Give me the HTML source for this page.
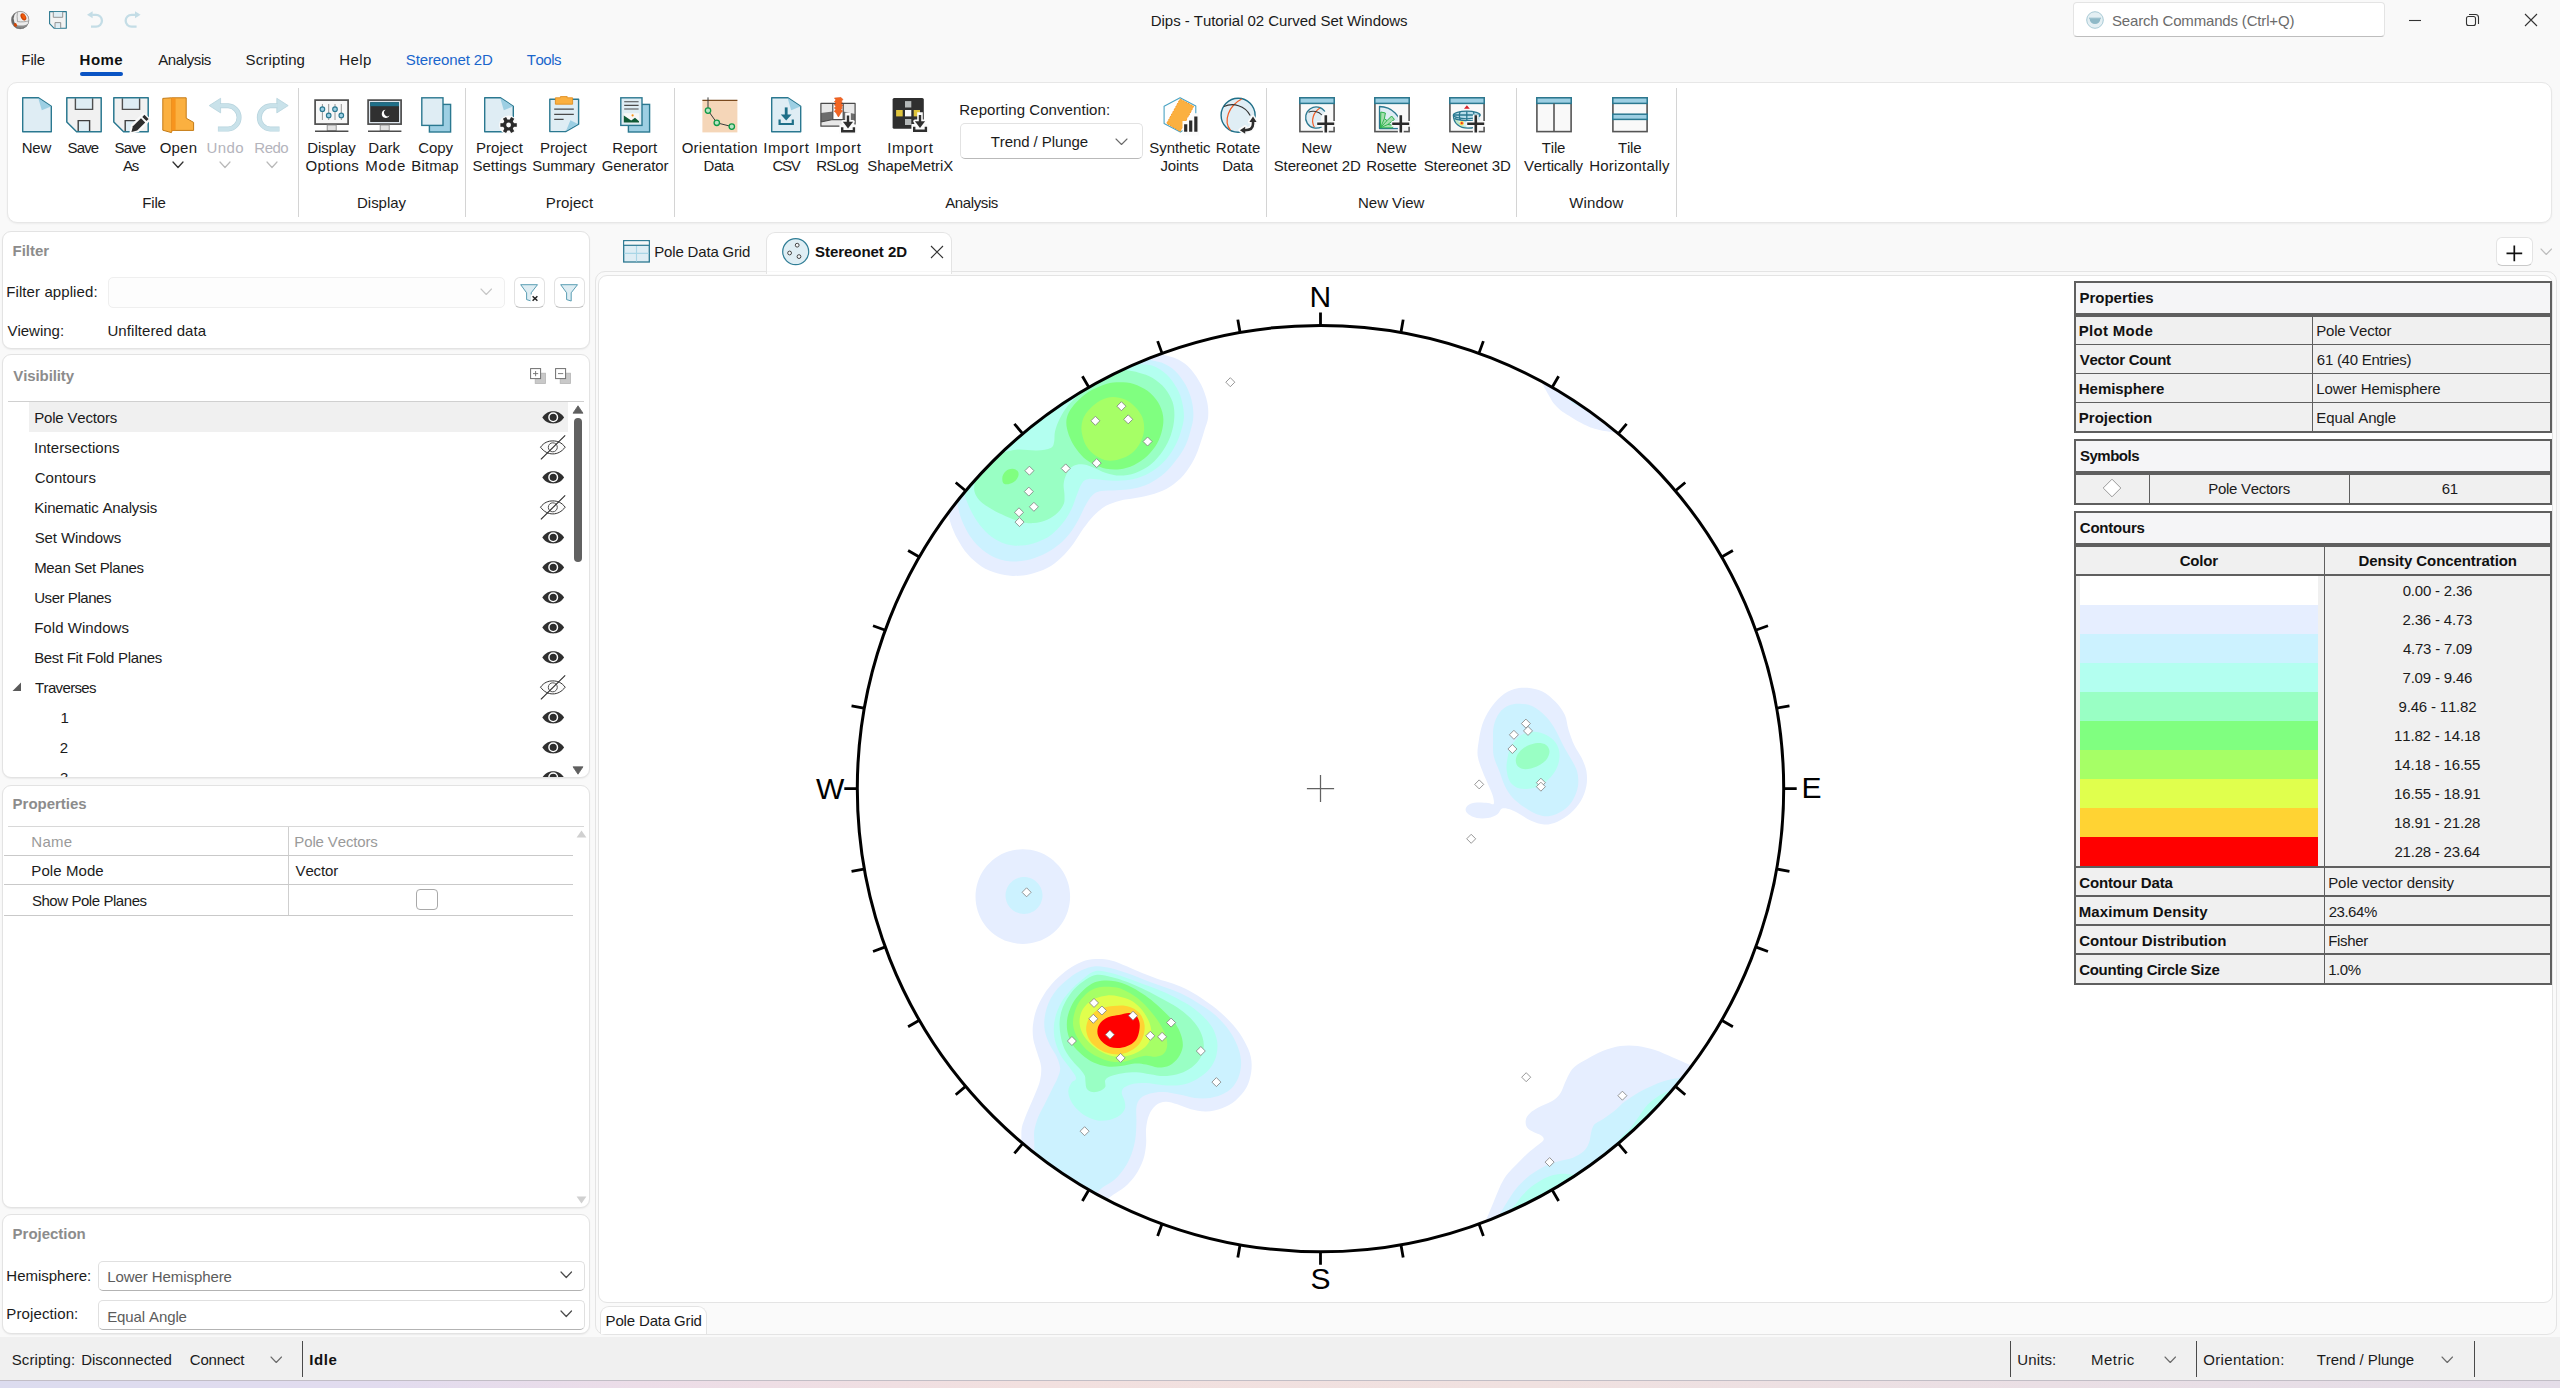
<!DOCTYPE html>
<html lang="en"><head><meta charset="utf-8"><title>Dips - Tutorial 02 Curved Set Windows</title><style>
html,body{margin:0;padding:0;overflow:hidden;}
body{width:2560px;height:1388px;overflow:hidden;background:#f9f9f9;font-family:"Liberation Sans",sans-serif;position:relative;}
.t{position:absolute;white-space:pre;font-kerning:none;}
.b{position:absolute;display:block;}
svg{overflow:visible;}
</style></head>
<body>
<span class="t" style="left:1150.77px;top:10.30px;font-size:15px;line-height:21px;color:#1b1b1b;letter-spacing:-0.046px;">Dips - Tutorial 02 Curved Set Windows</span>
<div class="b" style="left:2073px;top:2px;width:311.5px;height:35px;background:#fff;border:1px solid #e4e4e4;border-bottom-color:#bdbdbd;border-radius:4px;box-sizing:border-box;"></div>
<svg class="b" style="left:2086px;top:11px;" width="18" height="18" viewBox="0 0 18 18"><circle cx="9" cy="9" r="8.3" fill="#e4eff3" stroke="#a9cbd6" stroke-width="1"/><path d="M3.6 7.6 H14.4 A5.4 5.4 0 0 1 3.6 7.6Z" fill="#8fb9c7"/><path d="M3 7.2 H15" stroke="#8fb9c7" stroke-width="1"/></svg>
<span class="t" style="left:2112.02px;top:10.30px;font-size:15px;line-height:21px;color:#6b6b6b;letter-spacing:-0.169px;">Search Commands (Ctrl+Q)</span>
<svg class="b" style="left:2408px;top:14px;" width="14" height="14" viewBox="0 0 14 14"><path d="M1 6.5 H13" stroke="#333" stroke-width="1.1"/></svg>
<svg class="b" style="left:2465px;top:13px;" width="15" height="15" viewBox="0 0 15 15"><rect x="1.5" y="3.5" width="9" height="9" rx="2" fill="none" stroke="#333" stroke-width="1.1"/><path d="M4 1.5 H10.5 A3 3 0 0 1 13.5 4.5 V11" fill="none" stroke="#333" stroke-width="1.1"/></svg>
<svg class="b" style="left:2524px;top:13px;" width="14" height="14" viewBox="0 0 14 14"><path d="M1 1 L13 13 M13 1 L1 13" stroke="#333" stroke-width="1.1"/></svg>
<span class="t" style="left:21.37px;top:49.10px;font-size:15px;line-height:21px;color:#1b1b1b;letter-spacing:-0.124px;">File</span>
<span class="t" style="left:79.60px;top:49.10px;font-size:15px;line-height:21px;color:#111;font-weight:700;letter-spacing:0.480px;">Home</span>
<div class="b" style="left:80px;top:72px;width:43px;height:4px;background:#0a54c4;border-radius:2px;"></div>
<span class="t" style="left:158.17px;top:49.10px;font-size:15px;line-height:21px;color:#1b1b1b;letter-spacing:-0.383px;">Analysis</span>
<span class="t" style="left:245.62px;top:49.10px;font-size:15px;line-height:21px;color:#1b1b1b;letter-spacing:0.124px;">Scripting</span>
<span class="t" style="left:339.37px;top:49.10px;font-size:15px;line-height:21px;color:#1b1b1b;letter-spacing:0.337px;">Help</span>
<span class="t" style="left:405.82px;top:49.10px;font-size:15px;line-height:21px;color:#1a66cc;letter-spacing:-0.117px;">Stereonet 2D</span>
<span class="t" style="left:526.86px;top:49.10px;font-size:15px;line-height:21px;color:#1a66cc;letter-spacing:-0.500px;">Tools</span>
<div class="b" style="left:7px;top:82.3px;width:2545px;height:140.5px;background:#fff;border:1px solid #e7e7e7;border-radius:10px;box-sizing:border-box;box-shadow:0 1px 2px rgba(0,0,0,.05);"></div>
<span class="t" style="left:21.67px;top:137.00px;font-size:15px;line-height:21px;color:#1b1b1b;letter-spacing:-0.157px;">New</span>
<span class="t" style="left:67.62px;top:137.00px;font-size:15px;line-height:21px;color:#1b1b1b;letter-spacing:-0.914px;">Save</span>
<span class="t" style="left:114.62px;top:137.00px;font-size:15px;line-height:21px;color:#1b1b1b;letter-spacing:-0.914px;">Save</span>
<span class="t" style="left:123.07px;top:155.00px;font-size:15px;line-height:21px;color:#1b1b1b;letter-spacing:-1.200px;">As</span>
<span class="t" style="left:159.69px;top:137.00px;font-size:15px;line-height:21px;color:#1b1b1b;letter-spacing:0.197px;">Open</span>
<span class="t" style="left:206.44px;top:137.00px;font-size:15px;line-height:21px;color:#b4b4bc;letter-spacing:0.443px;">Undo</span>
<span class="t" style="left:254.37px;top:137.00px;font-size:15px;line-height:21px;color:#b4b4bc;letter-spacing:-0.533px;">Redo</span>
<span class="t" style="left:307.27px;top:137.00px;font-size:15px;line-height:21px;color:#1b1b1b;letter-spacing:-0.104px;">Display</span>
<span class="t" style="left:305.59px;top:155.00px;font-size:15px;line-height:21px;color:#1b1b1b;letter-spacing:0.260px;">Options</span>
<span class="t" style="left:368.37px;top:137.00px;font-size:15px;line-height:21px;color:#1b1b1b;letter-spacing:-0.020px;">Dark</span>
<span class="t" style="left:365.17px;top:155.00px;font-size:15px;line-height:21px;color:#1b1b1b;letter-spacing:0.892px;">Mode</span>
<span class="t" style="left:418.24px;top:137.00px;font-size:15px;line-height:21px;color:#1b1b1b;letter-spacing:-0.075px;">Copy</span>
<span class="t" style="left:411.37px;top:155.00px;font-size:15px;line-height:21px;color:#1b1b1b;letter-spacing:0.115px;">Bitmap</span>
<span class="t" style="left:476.07px;top:137.00px;font-size:15px;line-height:21px;color:#1b1b1b;letter-spacing:0.026px;">Project</span>
<span class="t" style="left:472.52px;top:155.00px;font-size:15px;line-height:21px;color:#1b1b1b;">Settings</span>
<span class="t" style="left:540.07px;top:137.00px;font-size:15px;line-height:21px;color:#1b1b1b;letter-spacing:0.009px;">Project</span>
<span class="t" style="left:532.32px;top:155.00px;font-size:15px;line-height:21px;color:#1b1b1b;letter-spacing:-0.244px;">Summary</span>
<span class="t" style="left:612.37px;top:137.00px;font-size:15px;line-height:21px;color:#1b1b1b;letter-spacing:-0.056px;">Report</span>
<span class="t" style="left:601.75px;top:155.00px;font-size:15px;line-height:21px;color:#1b1b1b;letter-spacing:-0.092px;">Generator</span>
<span class="t" style="left:681.69px;top:137.00px;font-size:15px;line-height:21px;color:#1b1b1b;letter-spacing:0.261px;">Orientation</span>
<span class="t" style="left:703.47px;top:155.00px;font-size:15px;line-height:21px;color:#1b1b1b;letter-spacing:-0.385px;">Data</span>
<span class="t" style="left:763.22px;top:137.00px;font-size:15px;line-height:21px;color:#1b1b1b;letter-spacing:0.617px;">Import</span>
<span class="t" style="left:772.44px;top:155.00px;font-size:15px;line-height:21px;color:#1b1b1b;letter-spacing:-1.200px;">CSV</span>
<span class="t" style="left:815.22px;top:137.00px;font-size:15px;line-height:21px;color:#1b1b1b;letter-spacing:0.617px;">Import</span>
<span class="t" style="left:816.17px;top:155.00px;font-size:15px;line-height:21px;color:#1b1b1b;letter-spacing:-0.767px;">RSLog</span>
<span class="t" style="left:887.22px;top:137.00px;font-size:15px;line-height:21px;color:#1b1b1b;letter-spacing:0.617px;">Import</span>
<span class="t" style="left:867.32px;top:155.00px;font-size:15px;line-height:21px;color:#1b1b1b;letter-spacing:-0.072px;">ShapeMetriX</span>
<span class="t" style="left:1149.32px;top:137.00px;font-size:15px;line-height:21px;color:#1b1b1b;letter-spacing:-0.053px;">Synthetic</span>
<span class="t" style="left:1160.47px;top:155.00px;font-size:15px;line-height:21px;color:#1b1b1b;letter-spacing:-0.162px;">Joints</span>
<span class="t" style="left:1215.77px;top:137.00px;font-size:15px;line-height:21px;color:#1b1b1b;letter-spacing:0.081px;">Rotate</span>
<span class="t" style="left:1222.17px;top:155.00px;font-size:15px;line-height:21px;color:#1b1b1b;letter-spacing:-0.151px;">Data</span>
<span class="t" style="left:1301.47px;top:137.00px;font-size:15px;line-height:21px;color:#1b1b1b;letter-spacing:-0.007px;">New</span>
<span class="t" style="left:1273.72px;top:155.00px;font-size:15px;line-height:21px;color:#1b1b1b;letter-spacing:-0.126px;">Stereonet 2D</span>
<span class="t" style="left:1376.27px;top:137.00px;font-size:15px;line-height:21px;color:#1b1b1b;letter-spacing:-0.007px;">New</span>
<span class="t" style="left:1366.27px;top:155.00px;font-size:15px;line-height:21px;color:#1b1b1b;letter-spacing:-0.166px;">Rosette</span>
<span class="t" style="left:1451.37px;top:137.00px;font-size:15px;line-height:21px;color:#1b1b1b;letter-spacing:0.143px;">New</span>
<span class="t" style="left:1423.72px;top:155.00px;font-size:15px;line-height:21px;color:#1b1b1b;letter-spacing:-0.126px;">Stereonet 3D</span>
<span class="t" style="left:1541.86px;top:137.00px;font-size:15px;line-height:21px;color:#1b1b1b;letter-spacing:-0.189px;">Tile</span>
<span class="t" style="left:1523.93px;top:155.00px;font-size:15px;line-height:21px;color:#1b1b1b;letter-spacing:-0.195px;">Vertically</span>
<span class="t" style="left:1617.96px;top:137.00px;font-size:15px;line-height:21px;color:#1b1b1b;letter-spacing:-0.189px;">Tile</span>
<span class="t" style="left:1589.27px;top:155.00px;font-size:15px;line-height:21px;color:#1b1b1b;letter-spacing:0.163px;">Horizontally</span>
<span class="t" style="left:142.27px;top:192.10px;font-size:15px;line-height:21px;color:#1b1b1b;letter-spacing:-0.158px;">File</span>
<span class="t" style="left:357.07px;top:192.10px;font-size:15px;line-height:21px;color:#1b1b1b;letter-spacing:-0.037px;">Display</span>
<span class="t" style="left:545.77px;top:192.10px;font-size:15px;line-height:21px;color:#1b1b1b;letter-spacing:0.109px;">Project</span>
<span class="t" style="left:945.17px;top:192.10px;font-size:15px;line-height:21px;color:#1b1b1b;letter-spacing:-0.383px;">Analysis</span>
<span class="t" style="left:1358.07px;top:192.10px;font-size:15px;line-height:21px;color:#1b1b1b;letter-spacing:-0.042px;">New View</span>
<span class="t" style="left:1569.33px;top:192.10px;font-size:15px;line-height:21px;color:#1b1b1b;letter-spacing:0.116px;">Window</span>
<div class="b" style="left:298.0px;top:88px;width:1px;height:129px;background:#d4d4d4;"></div>
<div class="b" style="left:465.0px;top:88px;width:1px;height:129px;background:#d4d4d4;"></div>
<div class="b" style="left:674.0px;top:88px;width:1px;height:129px;background:#d4d4d4;"></div>
<div class="b" style="left:1266.0px;top:88px;width:1px;height:129px;background:#d4d4d4;"></div>
<div class="b" style="left:1516.0px;top:88px;width:1px;height:129px;background:#d4d4d4;"></div>
<div class="b" style="left:1676.0px;top:88px;width:1px;height:129px;background:#d4d4d4;"></div>
<svg class="b" style="left:172.0px;top:161.45px;" width="12" height="7.5" viewBox="0 0 12 7.5"><path d="M1 1 L6.0 6.5 L11 1" fill="none" stroke="#333" stroke-width="1.3" stroke-linecap="round" stroke-linejoin="round"/></svg>
<svg class="b" style="left:219.0px;top:161.45px;" width="12" height="7.5" viewBox="0 0 12 7.5"><path d="M1 1 L6.0 6.5 L11 1" fill="none" stroke="#b9b9b9" stroke-width="1.2" stroke-linecap="round" stroke-linejoin="round"/></svg>
<svg class="b" style="left:266.0px;top:161.45px;" width="12" height="7.5" viewBox="0 0 12 7.5"><path d="M1 1 L6.0 6.5 L11 1" fill="none" stroke="#b9b9b9" stroke-width="1.2" stroke-linecap="round" stroke-linejoin="round"/></svg>
<span class="t" style="left:959.37px;top:99.30px;font-size:15px;line-height:21px;color:#1b1b1b;letter-spacing:0.072px;">Reporting Convention:</span>
<div class="b" style="left:960px;top:123px;width:183px;height:36px;background:#fff;border:1px solid #e2e2e2;border-bottom-color:#b9b9b9;border-radius:5px;box-sizing:border-box;"></div>
<span class="t" style="left:990.66px;top:131.30px;font-size:15px;line-height:21px;color:#1b1b1b;letter-spacing:-0.076px;">Trend / Plunge</span>
<svg class="b" style="left:1114.8px;top:137.75px;" width="13" height="7.5" viewBox="0 0 13 7.5"><path d="M1 1 L6.5 6.5 L12 1" fill="none" stroke="#6a6a6a" stroke-width="1.1" stroke-linecap="round" stroke-linejoin="round"/></svg>
<svg class="b" style="left:10.8px;top:10.8px;" width="18.4" height="18.4" viewBox="0 0 18.4 18.4"><defs><clipPath id="lg"><circle cx="9.2" cy="9.1" r="8.9"/></clipPath></defs><circle cx="9.2" cy="9.1" r="8.9" fill="#666"/><g clip-path="url(#lg)"><ellipse cx="11" cy="7.6" rx="8.4" ry="8.6" fill="#ececec"/><path d="M3 12.4 C7 15.6 14 15.4 19 11.4 L19 13.6 C14 18 6 17.6 2.4 14.4 Z" fill="#8c8c8c"/><path d="M6.4 0.5 C6 4 6 7.4 6.5 10.6 C10.4 11.2 14.6 10.8 18.4 9.8" fill="none" stroke="#8f8f8f" stroke-width="0.75"/><ellipse cx="12.4" cy="5.9" rx="2.5" ry="3.8" transform="rotate(-30 12.4 5.9)" fill="#cf4606"/><ellipse cx="12.7" cy="5.6" rx="1.5" ry="2.6" transform="rotate(-30 12.7 5.6)" fill="#f05a0a"/><ellipse cx="4.4" cy="14" rx="1.5" ry="2" transform="rotate(-25 4.4 14)" fill="#cf4606"/></g><circle cx="9.2" cy="9.1" r="8.7" fill="none" stroke="#7d7d7d" stroke-width="0.6"/></svg>
<svg class="b" style="left:49px;top:10.9px;" width="18" height="18" viewBox="0 0 18 18"><path d="M0.6 0.6 H17.3 V17.3 H5.2 L0.6 12.7 Z" fill="#f3f3f3" stroke="#2a7890" stroke-width="1.1" stroke-linejoin="round"/><path d="M4.3 0.9 V6.3 H13.7 V0.9" fill="#dfedf4" stroke="#8a8a8a" stroke-width="0.9"/><path d="M6 17 V11.6 H11.7 V17" fill="#dfedf4" stroke="#8a8a8a" stroke-width="0.9"/></svg>
<svg class="b" style="left:87px;top:11.1px;" width="17" height="17.5" viewBox="0 0 17 17.5"><path d="M0 3.8 L5.6 0.3 V7.3 Z" fill="#c4dde6"/><path d="M5.2 3.8 H9 A5.9 5.9 0 0 1 9 15.7 H4" fill="none" stroke="#c4dde6" stroke-width="2.3"/></svg>
<svg class="b" style="left:123.5px;top:11.1px;" width="17" height="17.5" viewBox="0 0 17 17.5"><g transform="translate(16.6 0) scale(-1 1)"><path d="M0 3.8 L5.6 0.3 V7.3 Z" fill="#c4dde6"/><path d="M5.2 3.8 H9 A5.9 5.9 0 0 1 9 15.7 H4" fill="none" stroke="#c4dde6" stroke-width="2.3"/></g></svg>
<svg class="b" style="left:22px;top:97px;" width="30" height="35.5" viewBox="0 0 30 35.5"><path d="M0.7 0.7 H16.2 L29.3 9.4 V34.8 H0.7 Z" fill="#dfedf4" stroke="#2a7890" stroke-width="1.4" stroke-linejoin="round"/><path d="M16.2 0.9 L29.1 9.4 L19.8 13.2 Z" fill="#9dcfe3"/></svg>
<svg class="b" style="left:66px;top:97px;" width="36" height="35.5" viewBox="0 0 36 35.5"><path d="M0.8 0.8 H35.2 V34.7 H10.6 L0.8 25 Z" fill="#f1f1f1"/><path d="M9.4 1.2 V12.4 H26.6 V1.2" fill="#dfedf4" stroke="#4f4f4f" stroke-width="1.4"/><path d="M12.2 34.5 V23.6 H23.6 V34.5" fill="#dfedf4" stroke="#3f3f3f" stroke-width="1.4"/><path d="M0.8 0.8 H35.2 V34.7 H10.6 L0.8 25 Z" fill="none" stroke="#2a7890" stroke-width="1.5" stroke-linejoin="round"/></svg>
<svg class="b" style="left:113px;top:97px;" width="37" height="36.5" viewBox="0 0 37 36.5"><path d="M0.8 0.8 H35.2 V34.7 H10.6 L0.8 25 Z" fill="#f1f1f1"/><path d="M9.4 1.2 V12.4 H26.6 V1.2" fill="#dfedf4" stroke="#4f4f4f" stroke-width="1.4"/><path d="M12.2 34.5 V23.6 H23.6 V34.5" fill="#dfedf4" stroke="#3f3f3f" stroke-width="1.4"/><path d="M0.8 0.8 H35.2 V34.7 H10.6 L0.8 25 Z" fill="none" stroke="#2a7890" stroke-width="1.5" stroke-linejoin="round"/><path d="M18 35.4 L19.6 28.4 L30.8 17.4 L36 22.6 L25 33.6 Z" fill="#fafafa" stroke="#fafafa" stroke-width="3" stroke-linejoin="round"/><path d="M18.4 35 L19.9 29.2 L28 21.2 L32.2 25.4 L24.2 33.5 Z" fill="#2d2d2d"/><path d="M29.3 19.9 L31.4 17.8 L35.6 22 L33.5 24.1 Z" fill="#2d2d2d"/></svg>
<svg class="b" style="left:161.5px;top:96.8px;" width="33" height="36.5" viewBox="0 0 33 36.5"><path d="M0.8 1.4 L9.5 0.8 H24.2 V21.2 L31.6 25.4 V33.4 H10.2 L9.4 35.6 L0.8 33.2 Z" fill="#fbb040" stroke="#c47a14" stroke-width="1" stroke-linejoin="round"/><path d="M9.5 1 H13.6 V33.2 H10.2 L9.5 35.2 Z" fill="#f7941d"/><path d="M9.5 1 V35.2" stroke="#e58a1a" stroke-width="0.7"/></svg>
<svg class="b" style="left:209px;top:97.5px;" width="33" height="34" viewBox="0 0 33 34"><path d="M0.2 7.6 L11.6 0.3 V14.9 Z" fill="#c9e2ea" stroke="#b6d3dd" stroke-width="0.8" stroke-linejoin="round"/><path d="M11 7.76 H19.2 A11.7 11.7 0 0 1 19.2 31.1 H8.9" fill="none" stroke="#b6d3dd" stroke-width="5"/><path d="M10.6 7.76 H19.2 A11.7 11.7 0 0 1 19.2 31.1 H9.3" fill="none" stroke="#c9e2ea" stroke-width="3.6"/></svg>
<svg class="b" style="left:256px;top:97.5px;" width="33" height="34" viewBox="0 0 33 34"><g transform="translate(32.4 0) scale(-1 1)"><path d="M0.2 7.6 L11.6 0.3 V14.9 Z" fill="#c9e2ea" stroke="#b6d3dd" stroke-width="0.8" stroke-linejoin="round"/><path d="M11 7.76 H18.2 A11.7 11.7 0 0 1 18.2 31.1 H8.9" fill="none" stroke="#b6d3dd" stroke-width="5"/><path d="M10.6 7.76 H18.2 A11.7 11.7 0 0 1 18.2 31.1 H9.3" fill="none" stroke="#c9e2ea" stroke-width="3.6"/></g></svg>
<svg class="b" style="left:314.3px;top:98.9px;" width="36" height="34" viewBox="0 0 36 34"><rect x="1.1" y="1.1" width="33" height="24" fill="#f8f8f8" stroke="#4d4d4d" stroke-width="1.7"/><rect x="13.2" y="26" width="9" height="5.6" fill="#e3e3e3" stroke="#8c8c8c" stroke-width="0.9"/><path d="M1 32.3 H34.4" stroke="#4d4d4d" stroke-width="1.5"/><path d="M8.4 5 V21" stroke="#8a8a8a" stroke-width="0.9"/><circle cx="8.4" cy="10.2" r="2.3" fill="#9dcfe3" stroke="#2a7890" stroke-width="1.1"/><path d="M14.7 5 V21" stroke="#8a8a8a" stroke-width="0.9"/><circle cx="14.7" cy="16.4" r="2.3" fill="#9dcfe3" stroke="#2a7890" stroke-width="1.1"/><path d="M21 5 V21" stroke="#8a8a8a" stroke-width="0.9"/><circle cx="21" cy="10.2" r="2.3" fill="#9dcfe3" stroke="#2a7890" stroke-width="1.1"/><path d="M27.3 5 V21" stroke="#8a8a8a" stroke-width="0.9"/><circle cx="27.3" cy="16.4" r="2.3" fill="#9dcfe3" stroke="#2a7890" stroke-width="1.1"/></svg>
<svg class="b" style="left:367.2px;top:98.9px;" width="36" height="34" viewBox="0 0 36 34"><rect x="1.1" y="1.1" width="33" height="24" fill="#dfe7ee" stroke="#4d4d4d" stroke-width="1.7"/><rect x="13.2" y="26" width="9" height="5.6" fill="#e3e3e3" stroke="#8c8c8c" stroke-width="0.9"/><path d="M1 32.3 H34.4" stroke="#4d4d4d" stroke-width="1.5"/><rect x="3.2" y="3.2" width="28.8" height="19.8" fill="#303030"/><rect x="3.2" y="3.2" width="28.8" height="4" fill="#1f6f88"/><path d="M18.6 10.8 A4.1 4.1 0 1 0 22.6 16.6 A3.5 3.5 0 0 1 18.6 10.8Z" fill="#fff"/></svg>
<svg class="b" style="left:421px;top:97px;" width="30.5" height="36" viewBox="0 0 30.5 36"><rect x="8.4" y="7.4" width="21.2" height="27.6" fill="#9dcfe3" stroke="#2a7890" stroke-width="1.4"/><rect x="0.8" y="0.8" width="21.2" height="27.6" fill="#dfedf4" stroke="#2a7890" stroke-width="1.4"/></svg>
<svg class="b" style="left:484px;top:97px;" width="34" height="38" viewBox="0 0 34 38"><path d="M0.7 0.7 H16.2 L29.3 9.4 V34.8 H0.7 Z" fill="#dfedf4" stroke="#2a7890" stroke-width="1.4" stroke-linejoin="round"/><path d="M16.2 0.9 L29.1 9.4 L19.8 13.2 Z" fill="#9dcfe3"/><circle cx="24.6" cy="28" r="9.6" fill="#fafafa"/><path d="M28.60 28.00 L32.80 28.00" stroke="#2b2b2b" stroke-width="3.6"/><path d="M26.60 31.46 L28.70 35.10" stroke="#2b2b2b" stroke-width="3.6"/><path d="M22.60 31.46 L20.50 35.10" stroke="#2b2b2b" stroke-width="3.6"/><path d="M20.60 28.00 L16.40 28.00" stroke="#2b2b2b" stroke-width="3.6"/><path d="M22.60 24.54 L20.50 20.90" stroke="#2b2b2b" stroke-width="3.6"/><path d="M26.60 24.54 L28.70 20.90" stroke="#2b2b2b" stroke-width="3.6"/><circle cx="24.6" cy="28" r="5.6" fill="#2b2b2b"/><circle cx="24.6" cy="28" r="2.4" fill="#fafafa"/></svg>
<svg class="b" style="left:548.8px;top:96px;" width="31" height="37" viewBox="0 0 31 37"><path d="M0.8 3.2 H29.6 V28.2 L16.6 35.6 H0.8 Z" fill="#dfedf4" stroke="#2a7890" stroke-width="1.4" stroke-linejoin="round"/><path d="M29 28 L17 35 L21.4 24.2 Z" fill="#9dcfe3"/><path d="M11.4 0.6 H18.2 V1.8 H23.6 V8.2 H6.4 V1.8 H11.4 Z" fill="#fbb040" stroke="#e08e22" stroke-width="0.9" stroke-linejoin="round"/><path d="M5.2 13.2 H24.8 M5.2 18.3 H24.8 M5.2 23.3 H14.6" stroke="#4a4a4a" stroke-width="1.2"/></svg>
<svg class="b" style="left:619.6px;top:97px;" width="31" height="36" viewBox="0 0 31 36"><rect x="8.4" y="7.4" width="21.2" height="27.6" fill="#9dcfe3" stroke="#2a7890" stroke-width="1.4"/><rect x="0.8" y="0.8" width="21.2" height="27.6" fill="#dfedf4" stroke="#2a7890" stroke-width="1.4"/><path d="M4.2 4.8 H18.6 M4.2 8.4 H18.6 M4.2 12 H18.6" stroke="#4a4a4a" stroke-width="1.1"/><rect x="3.6" y="16.2" width="15.6" height="9.4" fill="#f7f7f7"/><path d="M3.8 25.6 V18.6 L11.2 23.4 L15 20.8 L19 24.2 V25.6 Z" fill="#0f5a36"/><circle cx="12.6" cy="18.4" r="1.1" fill="#f7941d"/></svg>
<svg class="b" style="left:702px;top:97px;" width="36" height="36" viewBox="0 0 36 36"><rect x="0.4" y="3.4" width="35" height="32" fill="#f5d6b8"/><path d="M0.4 3.4 H35.4" stroke="#7a4a1e" stroke-width="1.2"/><path d="M6 0.4 V13.4 L14.8 25.8 L29.8 29.6" fill="none" stroke="#3a3a3a" stroke-width="1"/><circle cx="6" cy="13.6" r="2.7" fill="#b9e3c3" stroke="#0e9a48" stroke-width="1.3"/><circle cx="14.8" cy="25.8" r="2.7" fill="#b9e3c3" stroke="#0e9a48" stroke-width="1.3"/><circle cx="29.8" cy="29.6" r="2.7" fill="#b9e3c3" stroke="#0e9a48" stroke-width="1.3"/></svg>
<svg class="b" style="left:770.6px;top:97px;" width="31" height="36" viewBox="0 0 31 36"><path d="M0.7 0.7 H16.599999999999998 L29.7 9.4 V34.8 H0.7 Z" fill="#dfedf4" stroke="#2a7890" stroke-width="1.4" stroke-linejoin="round"/><path d="M16.599999999999998 0.9 L29.5 9.4 L20.2 13.2 Z" fill="#9dcfe3"/><path d="M15.2 10.4 V21" stroke="#1f6f88" stroke-width="2.8"/><path d="M9.8 17.4 H20.6 L15.2 23.6 Z" fill="#1f6f88"/><path d="M8.6 22.6 V27 H21.8 V22.6" fill="none" stroke="#1f6f88" stroke-width="2.2"/></svg>
<svg class="b" style="left:820px;top:96.5px;" width="37" height="37" viewBox="0 0 37 37"><path d="M0.9 6.4 H35.1 V29.2 H0.9 Z" fill="#e8e8e8"/><path d="M0.9 16 L12.8 14.6 V22.4 L0.9 25 Z" fill="#6c6c6c"/><path d="M23.2 14.6 L35.1 17 V26 L23.2 22.4 Z" fill="#6c6c6c"/><path d="M12.8 6.4 H23.2 V22.6 H12.8 Z" fill="#fdfdfd"/><path d="M0.9 6.4 H35.1 V29.2 H0.9 Z M12.8 6.4 V22.6 H23.2 V6.4 M0.9 25 L12.8 22.5 M23.2 22.5 L35.1 26" fill="none" stroke="#4a4a4a" stroke-width="1.2" stroke-linejoin="round"/><path d="M14.4 1 L21 0.4 L23 2.6 L21 4.4 L22.4 5 L21 6.6 L23 8.4 L21 10.2 L22.4 10.8 L21 12.4 L22.6 14 L21 15.8 L18.4 20 L16 15.8 L14.2 14.2 L16 12.6 L14.2 11 L16 9.4 L14.2 7.8 L16 6.2 L14.4 4.6 L16 3 Z" fill="#f26522" stroke="#d9480f" stroke-width="0.5" stroke-linejoin="round"/><path d="M22 27 H34 V34.4 H22 Z" fill="#fbfbfb"/><path d="M28 18.6 V27 M22.2 30.2 V34.2 H33.9 V30.2" fill="none" stroke="#fbfbfb" stroke-width="5.6" stroke-linecap="square"/><path d="M22.9 24.8 H33.1 L28 31.4 Z" fill="#fbfbfb" stroke="#fbfbfb" stroke-width="3.4" stroke-linejoin="round"/><path d="M28 18.6 V27 M22.2 30.2 V34.2 H33.9 V30.2" fill="none" stroke="#2f2f2f" stroke-width="2.4"/><path d="M22.9 24.8 H33.1 L28 31.4 Z" fill="#2f2f2f"/></svg>
<svg class="b" style="left:892px;top:97px;" width="37" height="37" viewBox="0 0 37 37"><rect x="0.6" y="0.9" width="31.2" height="30.9" rx="1.6" fill="#2f2f2f"/><rect x="13" y="4.1" width="6.3" height="6.4" fill="#b4b8b8"/><rect x="4.1" y="13" width="6.6" height="6.4" fill="#e0c53c"/><rect x="13" y="13" width="6.3" height="6.4" fill="#fbfbfb"/><rect x="21.7" y="13" width="6.3" height="6.4" fill="#e0c53c"/><rect x="13" y="22" width="6.3" height="6" fill="#b4b8b8"/><g transform="translate(0 -0.5)"><path d="M22 27 H34 V34.4 H22 Z" fill="#fbfbfb"/><path d="M28 18.6 V27 M22.2 30.2 V34.2 H33.9 V30.2" fill="none" stroke="#fbfbfb" stroke-width="5.6" stroke-linecap="square"/><path d="M22.9 24.8 H33.1 L28 31.4 Z" fill="#fbfbfb" stroke="#fbfbfb" stroke-width="3.4" stroke-linejoin="round"/><path d="M28 18.6 V27 M22.2 30.2 V34.2 H33.9 V30.2" fill="none" stroke="#2f2f2f" stroke-width="2.4"/><path d="M22.9 24.8 H33.1 L28 31.4 Z" fill="#2f2f2f"/></g></svg>
<svg class="b" style="left:1163px;top:97px;" width="36" height="36" viewBox="0 0 36 36"><path d="M17.1 0.7 L32.8 9.1 V26.4 L17.3 35.1 L1.1 26.6 V9.3 Z" fill="#fefefe" stroke="#4ba3c3" stroke-width="1.1" stroke-linejoin="round"/><path d="M17.1 2 L30.7 9.3 L17.3 34.4 L3.7 26.4 Z" fill="#fbb040" stroke="#f7941d" stroke-width="0.9" stroke-dasharray="2 1" stroke-linejoin="round"/><path d="M22.7 35.2 V27.3 M27.7 35.2 V23.4 M32.85 35.2 V19.4" stroke="#fbfbfb" stroke-width="6.4" stroke-linecap="square"/><path d="M22.7 34.85 V27.3 M27.7 34.85 V23.4 M32.85 34.85 V19.4" stroke="#2b2b2b" stroke-width="3.2"/></svg>
<svg class="b" style="left:1220px;top:97px;" width="38" height="38" viewBox="0 0 38 38"><circle cx="18.1" cy="18.3" r="17" fill="#e0eef5" stroke="#1f6f88" stroke-width="1.4"/><path d="M21.7 2 C9 8.4 2.8 24 10.5 33.4" fill="none" stroke="#f15a22" stroke-width="1.2"/><path d="M3.9 9.5 C13 5.4 25 8.4 30.2 18.4" fill="none" stroke="#333" stroke-width="1.1"/><path d="M33 24.4 V27 Q33 33.2 25 33.2" fill="none" stroke="#fbfbfb" stroke-width="5.8"/><path d="M33 19.6 L36.6 25 H29.4 Z M19.9 33.2 L25.2 29.7 V36.7 Z" fill="#fbfbfb" stroke="#fbfbfb" stroke-width="3.2" stroke-linejoin="round"/><path d="M33 24.4 V27 Q33 33.2 25 33.2" fill="none" stroke="#2d2d2d" stroke-width="2.6"/><path d="M33 19.6 L36.6 25 H29.4 Z M19.9 33.2 L25.2 29.7 V36.7 Z" fill="#2d2d2d"/></svg>
<svg class="b" style="left:1299px;top:97px;" width="37.5" height="37" viewBox="0 0 37.5 37"><rect x="0.9" y="0.9" width="34.2" height="33.7" fill="#f9f9f9" stroke="#555" stroke-width="1.6"/><rect x="0.8" y="0.8" width="34.4" height="5.6" fill="#9dcfe3" stroke="#2a7890" stroke-width="1.5"/><path d="M25.9 14.5 A10.6 10.6 0 1 0 22.8 29.6 L22 20 Z" fill="#dfedf4"/><path d="M25.9 14.5 A10.6 10.6 0 1 0 22.8 29.6" fill="none" stroke="#2a7890" stroke-width="1.3"/><path d="M21 10.9 C14.6 14.6 11.4 23.6 15.4 30.2" fill="none" stroke="#f15a22" stroke-width="1.2"/><path d="M9.5 15.2 C14 13.2 19.6 14.4 22.9 18" fill="none" stroke="#3a3a3a" stroke-width="1.1"/><path d="M26.8 17.6 V36.4 M17.6 26.8 H36.4" stroke="#fbfbfb" stroke-width="5.8" fill="none"/><path d="M26.8 18.2 V35.6 M18.2 26.8 H35.2" stroke="#2b2b2b" stroke-width="2.6" fill="none"/></svg>
<svg class="b" style="left:1374px;top:97px;" width="37.5" height="37" viewBox="0 0 37.5 37"><rect x="0.9" y="0.9" width="34.2" height="33.7" fill="#f9f9f9" stroke="#555" stroke-width="1.6"/><rect x="0.8" y="0.8" width="34.4" height="5.6" fill="#9dcfe3" stroke="#2a7890" stroke-width="1.5"/><path d="M5.5 9.5 A22.1 22.1 0 0 1 27.6 31.6 H5.5 Z" fill="#dfedf4" stroke="#2a7890" stroke-width="1.3" stroke-linejoin="round"/><path d="M6.4 30.8 L6.8 15 L11.4 16 L10.4 21.6 L13 23.6 L17.6 19 L20.4 22.4 L14 27.4 L19.4 28.4 L18.6 30.8 Z" fill="#a5dfae" stroke="#2bb24c" stroke-width="1" stroke-linejoin="round"/><path d="M6.4 30.8 L10.4 21.6 M6.4 30.8 L13 23.6 M6.4 30.8 L14 27.4" stroke="#2bb24c" stroke-width="0.9"/><path d="M26.8 17.6 V36.4 M17.6 26.8 H36.4" stroke="#fbfbfb" stroke-width="5.8" fill="none"/><path d="M26.8 18.2 V35.6 M18.2 26.8 H35.2" stroke="#2b2b2b" stroke-width="2.6" fill="none"/></svg>
<svg class="b" style="left:1449px;top:97px;" width="37.5" height="37" viewBox="0 0 37.5 37"><rect x="0.9" y="0.9" width="34.2" height="33.7" fill="#f9f9f9" stroke="#555" stroke-width="1.6"/><rect x="0.8" y="0.8" width="34.4" height="5.6" fill="#9dcfe3" stroke="#2a7890" stroke-width="1.5"/><path d="M15 11.8 L17.9 8.2 L20.8 11.8 Z" fill="#d6202a"/><path d="M4.4 18.4 C4.6 26.6 10.6 31 19 31 C24 31 28 29.4 30.6 26.6 L31 18.4 Z" fill="#d9edf4"/><path d="M5.4 22 C7 27.6 12 30.8 19 30.6 C16 29 10 27 8 22 Z" fill="#bfe8c2"/><ellipse cx="17.8" cy="18" rx="13.4" ry="3.8" fill="#b9deeb" stroke="#2a7890" stroke-width="1.3"/><path d="M4.4 18.2 C4.4 26.6 10.6 31.2 19 31.2 C24 31.2 28 29.6 30.4 27" fill="none" stroke="#2a7890" stroke-width="1.3"/><path d="M5.4 21.4 C10 24 22 24.4 30 21.6 M11 14.8 C10 18 10.2 21 11.6 23.4 M17.8 14.2 V23.8 M24.6 14.8 C25.4 18 25.2 21 24.2 23.4 M4.6 18 H31" fill="none" stroke="#2a7890" stroke-width="1.3"/><circle cx="12.8" cy="26.2" r="2.1" fill="#ffd23a"/><circle cx="12.8" cy="26.2" r="1.1" fill="#ee3124"/><path d="M26.8 17.6 V36.4 M17.6 26.8 H36.4" stroke="#fbfbfb" stroke-width="5.8" fill="none"/><path d="M26.8 18.2 V35.6 M18.2 26.8 H35.2" stroke="#2b2b2b" stroke-width="2.6" fill="none"/></svg>
<svg class="b" style="left:1536px;top:97px;" width="36" height="35.5" viewBox="0 0 36 35.5"><rect x="0.9" y="0.9" width="34.2" height="33.7" fill="#f9f9f9" stroke="#555" stroke-width="1.6"/><rect x="0.8" y="0.8" width="34.4" height="5.6" fill="#9dcfe3" stroke="#2a7890" stroke-width="1.5"/><path d="M18 6.6 V34.6" stroke="#555" stroke-width="1.6"/></svg>
<svg class="b" style="left:1612px;top:97px;" width="36" height="35.5" viewBox="0 0 36 35.5"><rect x="0.9" y="0.9" width="34.2" height="33.7" fill="#f9f9f9" stroke="#555" stroke-width="1.6"/><rect x="0.8" y="0.8" width="34.4" height="5.6" fill="#9dcfe3" stroke="#2a7890" stroke-width="1.5"/><rect x="0.8" y="17.2" width="34.4" height="5.2" fill="#9dcfe3" stroke="#2a7890" stroke-width="1.5"/></svg>
<div class="b" style="left:2px;top:231px;width:588px;height:118px;background:#fff;border:1px solid #e3e3e3;border-radius:9px;box-sizing:border-box;box-shadow:0 1px 1.5px rgba(0,0,0,.06);"></div>
<span class="t" style="left:12.60px;top:240.00px;font-size:15px;line-height:21px;color:#8c8c8c;font-weight:700;letter-spacing:-0.028px;">Filter</span>
<span class="t" style="left:6.27px;top:281.30px;font-size:15px;line-height:21px;color:#1b1b1b;letter-spacing:0.090px;">Filter applied:</span>
<div class="b" style="left:108px;top:277px;width:397px;height:31px;background:#fdfdfd;border:1px solid #efefef;border-radius:5px;box-sizing:border-box;"></div>
<svg class="b" style="left:480.05px;top:288.05px;" width="12.5" height="7.5" viewBox="0 0 12.5 7.5"><path d="M1 1 L6.25 6.5 L11.5 1" fill="none" stroke="#c6c6c6" stroke-width="1.1" stroke-linecap="round" stroke-linejoin="round"/></svg>
<div class="b" style="left:513.5px;top:277px;width:31px;height:31px;background:#fff;border:1px solid #e2e2e2;border-bottom-color:#c4c4c4;border-radius:6px;box-sizing:border-box;"></div>
<div class="b" style="left:553.5px;top:277px;width:31px;height:31px;background:#fff;border:1px solid #e2e2e2;border-bottom-color:#c4c4c4;border-radius:6px;box-sizing:border-box;"></div>
<svg class="b" style="left:519.8px;top:283.8px;" width="20" height="19" viewBox="0 0 20 19"><path d="M0.7 0.7 H17.5 L11.2 8.8 V17 L6.6 15.6 V8.8 Z" fill="#deedf3" stroke="#4a94ab" stroke-width="0.9" stroke-linejoin="round"/><rect x="10.5" y="10.5" width="9.5" height="8.5" fill="#fff"/><path d="M12.6 12.2 L17.4 16.8 M17.4 12.2 L12.6 16.8" stroke="#222" stroke-width="1.5"/></svg>
<svg class="b" style="left:559.7px;top:283.8px;" width="20" height="19" viewBox="0 0 20 19"><path d="M0.7 0.7 H17.5 L11.2 8.8 V17 L6.6 15.6 V8.8 Z" fill="#deedf3" stroke="#4a94ab" stroke-width="0.9" stroke-linejoin="round"/></svg>
<span class="t" style="left:7.43px;top:320.20px;font-size:15px;line-height:21px;color:#1b1b1b;letter-spacing:-0.009px;">Viewing:</span>
<span class="t" style="left:107.44px;top:320.20px;font-size:15px;line-height:21px;color:#1b1b1b;letter-spacing:0.078px;">Unfiltered data</span>
<div class="b" style="left:2px;top:354px;width:588px;height:424px;background:#fff;border:1px solid #e3e3e3;border-radius:9px;box-sizing:border-box;box-shadow:0 1px 1.5px rgba(0,0,0,.06);overflow:hidden;"></div>
<span class="t" style="left:13.30px;top:365.30px;font-size:15px;line-height:21px;color:#8c8c8c;font-weight:700;letter-spacing:-0.100px;">Visibility</span>
<svg class="b" style="left:530px;top:367.6px;" width="16.5" height="16.5" viewBox="0 0 16.5 16.5"><rect x="5.2" y="5.2" width="10.3" height="10.3" fill="#c9c9c9" stroke="#b5b5b5" stroke-width="0.8"/><rect x="0.6" y="0.6" width="10" height="10" fill="#fff" stroke="#6f6f6f" stroke-width="1"/><path d="M3 5.6 H8.2" stroke="#6f6f6f" stroke-width="0.9"/><path d="M5.6 3 V8.2" stroke="#6f6f6f" stroke-width="0.9"/></svg>
<svg class="b" style="left:555px;top:367.6px;" width="16.5" height="16.5" viewBox="0 0 16.5 16.5"><rect x="5.2" y="5.2" width="10.3" height="10.3" fill="#c9c9c9" stroke="#b5b5b5" stroke-width="0.8"/><rect x="0.6" y="0.6" width="10" height="10" fill="#fff" stroke="#6f6f6f" stroke-width="1"/><path d="M3 5.6 H8.2" stroke="#6f6f6f" stroke-width="0.9"/></svg>
<div class="b" style="left:8px;top:401px;width:576px;height:1px;background:#d0d0d0;"></div>
<div class="b" style="left:29px;top:402px;width:539px;height:30px;background:#f0f0f0;"></div>
<span class="t" style="left:34.17px;top:407.30px;font-size:15px;line-height:21px;color:#1b1b1b;letter-spacing:-0.179px;">Pole Vectors</span>
<svg class="b" style="left:541.8px;top:410.7px;" width="23" height="13" viewBox="0 0 23 13"><path d="M0.3 6.5 C3.5 1.6 7.3 0.2 11.2 0.2 C15.1 0.2 18.9 1.6 22.1 6.5 C18.9 11.2 15.1 12.4 11.2 12.4 C7.3 12.4 3.5 11.2 0.3 6.5Z" fill="#2f2f2f"/><circle cx="11.2" cy="6.3" r="4.3" fill="#2f2f2f" stroke="#fff" stroke-width="1.45"/><circle cx="11.2" cy="6.3" r="2.85" fill="#2f2f2f"/></svg>
<span class="t" style="left:34.02px;top:437.30px;font-size:15px;line-height:21px;color:#1b1b1b;letter-spacing:0.040px;">Intersections</span>
<svg class="b" style="left:540px;top:434.7px;" width="26" height="25" viewBox="0 0 26 25"><path d="M0.5 12.2 C4 7.4 8.2 5.9 12.8 5.9 C17.4 5.9 21.6 7.4 25.2 12.2 C21.6 16.8 17.4 18.9 12.8 18.9 C8.2 18.9 4 16.8 0.5 12.2Z" fill="#fbfbfb" stroke="#333" stroke-width="1"/><circle cx="12.8" cy="12.3" r="4.5" fill="none" stroke="#555" stroke-width="1"/><path d="M0.9 24.4 L25.2 0.4" stroke="#2a2a2a" stroke-width="1.1"/></svg>
<span class="t" style="left:34.64px;top:467.30px;font-size:15px;line-height:21px;color:#1b1b1b;letter-spacing:0.063px;">Contours</span>
<svg class="b" style="left:541.8px;top:470.7px;" width="23" height="13" viewBox="0 0 23 13"><path d="M0.3 6.5 C3.5 1.6 7.3 0.2 11.2 0.2 C15.1 0.2 18.9 1.6 22.1 6.5 C18.9 11.2 15.1 12.4 11.2 12.4 C7.3 12.4 3.5 11.2 0.3 6.5Z" fill="#2f2f2f"/><circle cx="11.2" cy="6.3" r="4.3" fill="#2f2f2f" stroke="#fff" stroke-width="1.45"/><circle cx="11.2" cy="6.3" r="2.85" fill="#2f2f2f"/></svg>
<span class="t" style="left:34.17px;top:497.30px;font-size:15px;line-height:21px;color:#1b1b1b;letter-spacing:-0.171px;">Kinematic Analysis</span>
<svg class="b" style="left:540px;top:494.7px;" width="26" height="25" viewBox="0 0 26 25"><path d="M0.5 12.2 C4 7.4 8.2 5.9 12.8 5.9 C17.4 5.9 21.6 7.4 25.2 12.2 C21.6 16.8 17.4 18.9 12.8 18.9 C8.2 18.9 4 16.8 0.5 12.2Z" fill="#fbfbfb" stroke="#333" stroke-width="1"/><circle cx="12.8" cy="12.3" r="4.5" fill="none" stroke="#555" stroke-width="1"/><path d="M0.9 24.4 L25.2 0.4" stroke="#2a2a2a" stroke-width="1.1"/></svg>
<span class="t" style="left:34.72px;top:527.30px;font-size:15px;line-height:21px;color:#1b1b1b;letter-spacing:-0.101px;">Set Windows</span>
<svg class="b" style="left:541.8px;top:530.7px;" width="23" height="13" viewBox="0 0 23 13"><path d="M0.3 6.5 C3.5 1.6 7.3 0.2 11.2 0.2 C15.1 0.2 18.9 1.6 22.1 6.5 C18.9 11.2 15.1 12.4 11.2 12.4 C7.3 12.4 3.5 11.2 0.3 6.5Z" fill="#2f2f2f"/><circle cx="11.2" cy="6.3" r="4.3" fill="#2f2f2f" stroke="#fff" stroke-width="1.45"/><circle cx="11.2" cy="6.3" r="2.85" fill="#2f2f2f"/></svg>
<span class="t" style="left:34.17px;top:557.30px;font-size:15px;line-height:21px;color:#1b1b1b;letter-spacing:-0.319px;">Mean Set Planes</span>
<svg class="b" style="left:541.8px;top:560.7px;" width="23" height="13" viewBox="0 0 23 13"><path d="M0.3 6.5 C3.5 1.6 7.3 0.2 11.2 0.2 C15.1 0.2 18.9 1.6 22.1 6.5 C18.9 11.2 15.1 12.4 11.2 12.4 C7.3 12.4 3.5 11.2 0.3 6.5Z" fill="#2f2f2f"/><circle cx="11.2" cy="6.3" r="4.3" fill="#2f2f2f" stroke="#fff" stroke-width="1.45"/><circle cx="11.2" cy="6.3" r="2.85" fill="#2f2f2f"/></svg>
<span class="t" style="left:34.24px;top:587.30px;font-size:15px;line-height:21px;color:#1b1b1b;letter-spacing:-0.450px;">User Planes</span>
<svg class="b" style="left:541.8px;top:590.7px;" width="23" height="13" viewBox="0 0 23 13"><path d="M0.3 6.5 C3.5 1.6 7.3 0.2 11.2 0.2 C15.1 0.2 18.9 1.6 22.1 6.5 C18.9 11.2 15.1 12.4 11.2 12.4 C7.3 12.4 3.5 11.2 0.3 6.5Z" fill="#2f2f2f"/><circle cx="11.2" cy="6.3" r="4.3" fill="#2f2f2f" stroke="#fff" stroke-width="1.45"/><circle cx="11.2" cy="6.3" r="2.85" fill="#2f2f2f"/></svg>
<span class="t" style="left:34.17px;top:617.30px;font-size:15px;line-height:21px;color:#1b1b1b;letter-spacing:0.052px;">Fold Windows</span>
<svg class="b" style="left:541.8px;top:620.7px;" width="23" height="13" viewBox="0 0 23 13"><path d="M0.3 6.5 C3.5 1.6 7.3 0.2 11.2 0.2 C15.1 0.2 18.9 1.6 22.1 6.5 C18.9 11.2 15.1 12.4 11.2 12.4 C7.3 12.4 3.5 11.2 0.3 6.5Z" fill="#2f2f2f"/><circle cx="11.2" cy="6.3" r="4.3" fill="#2f2f2f" stroke="#fff" stroke-width="1.45"/><circle cx="11.2" cy="6.3" r="2.85" fill="#2f2f2f"/></svg>
<span class="t" style="left:34.17px;top:647.30px;font-size:15px;line-height:21px;color:#1b1b1b;letter-spacing:-0.324px;">Best Fit Fold Planes</span>
<svg class="b" style="left:541.8px;top:650.7px;" width="23" height="13" viewBox="0 0 23 13"><path d="M0.3 6.5 C3.5 1.6 7.3 0.2 11.2 0.2 C15.1 0.2 18.9 1.6 22.1 6.5 C18.9 11.2 15.1 12.4 11.2 12.4 C7.3 12.4 3.5 11.2 0.3 6.5Z" fill="#2f2f2f"/><circle cx="11.2" cy="6.3" r="4.3" fill="#2f2f2f" stroke="#fff" stroke-width="1.45"/><circle cx="11.2" cy="6.3" r="2.85" fill="#2f2f2f"/></svg>
<span class="t" style="left:35.06px;top:677.30px;font-size:15px;line-height:21px;color:#1b1b1b;letter-spacing:-0.650px;">Traverses</span>
<svg class="b" style="left:540px;top:674.7px;" width="26" height="25" viewBox="0 0 26 25"><path d="M0.5 12.2 C4 7.4 8.2 5.9 12.8 5.9 C17.4 5.9 21.6 7.4 25.2 12.2 C21.6 16.8 17.4 18.9 12.8 18.9 C8.2 18.9 4 16.8 0.5 12.2Z" fill="#fbfbfb" stroke="#333" stroke-width="1"/><circle cx="12.8" cy="12.3" r="4.5" fill="none" stroke="#555" stroke-width="1"/><path d="M0.9 24.4 L25.2 0.4" stroke="#2a2a2a" stroke-width="1.1"/></svg>
<span class="t" style="left:60.46px;top:707.30px;font-size:15px;line-height:21px;color:#1b1b1b;">1</span>
<svg class="b" style="left:541.8px;top:710.7px;" width="23" height="13" viewBox="0 0 23 13"><path d="M0.3 6.5 C3.5 1.6 7.3 0.2 11.2 0.2 C15.1 0.2 18.9 1.6 22.1 6.5 C18.9 11.2 15.1 12.4 11.2 12.4 C7.3 12.4 3.5 11.2 0.3 6.5Z" fill="#2f2f2f"/><circle cx="11.2" cy="6.3" r="4.3" fill="#2f2f2f" stroke="#fff" stroke-width="1.45"/><circle cx="11.2" cy="6.3" r="2.85" fill="#2f2f2f"/></svg>
<span class="t" style="left:59.85px;top:737.30px;font-size:15px;line-height:21px;color:#1b1b1b;">2</span>
<svg class="b" style="left:541.8px;top:740.7px;" width="23" height="13" viewBox="0 0 23 13"><path d="M0.3 6.5 C3.5 1.6 7.3 0.2 11.2 0.2 C15.1 0.2 18.9 1.6 22.1 6.5 C18.9 11.2 15.1 12.4 11.2 12.4 C7.3 12.4 3.5 11.2 0.3 6.5Z" fill="#2f2f2f"/><circle cx="11.2" cy="6.3" r="4.3" fill="#2f2f2f" stroke="#fff" stroke-width="1.45"/><circle cx="11.2" cy="6.3" r="2.85" fill="#2f2f2f"/></svg>
<div class="b" style="left:3px;top:760px;width:565px;height:17px;overflow:hidden;"><span class="t" style="left:57.03px;top:7.30px;font-size:15px;line-height:21px;color:#1b1b1b;">3</span><svg class="b" style="left:538.8px;top:10.7px;" width="23" height="13" viewBox="0 0 23 13"><path d="M0.3 6.5 C3.5 1.6 7.3 0.2 11.2 0.2 C15.1 0.2 18.9 1.6 22.1 6.5 C18.9 11.2 15.1 12.4 11.2 12.4 C7.3 12.4 3.5 11.2 0.3 6.5Z" fill="#2f2f2f"/><circle cx="11.2" cy="6.3" r="4.3" fill="#2f2f2f" stroke="#fff" stroke-width="1.45"/><circle cx="11.2" cy="6.3" r="2.85" fill="#2f2f2f"/></svg></div>
<svg class="b" style="left:12px;top:682px;" width="10" height="10" viewBox="0 0 10 10"><path d="M9 0.5 V9 H0.5 Z" fill="#5a5a5a"/></svg>
<svg class="b" style="left:572px;top:404.5px;" width="12" height="9" viewBox="0 0 12 9"><path d="M6 0.8 L11 8.2 H1 Z" fill="#5f5f5f" stroke="#5f5f5f" stroke-width="0.8" stroke-linejoin="round"/></svg>
<div class="b" style="left:574px;top:418px;width:8px;height:144px;background:#616161;border-radius:4px;"></div>
<svg class="b" style="left:572px;top:765.5px;" width="12" height="9" viewBox="0 0 12 9"><path d="M6 8.2 L11 0.8 H1 Z" fill="#5f5f5f" stroke="#5f5f5f" stroke-width="0.8" stroke-linejoin="round"/></svg>
<div class="b" style="left:2px;top:784.5px;width:588px;height:423.5px;background:#fff;border:1px solid #e3e3e3;border-radius:9px;box-sizing:border-box;box-shadow:0 1px 1.5px rgba(0,0,0,.06);"></div>
<span class="t" style="left:12.60px;top:793.00px;font-size:15px;line-height:21px;color:#8c8c8c;font-weight:700;letter-spacing:-0.020px;">Properties</span>
<div class="b" style="left:8px;top:826px;width:576px;height:1px;background:#d8d8d8;"></div>
<div class="b" style="left:288px;top:827px;width:1px;height:88.5px;background:#cfcfcf;"></div>
<div class="b" style="left:4px;top:855px;width:569px;height:1.2px;background:#c9c9c9;"></div>
<div class="b" style="left:4px;top:884.3px;width:569px;height:1.2px;background:#c9c9c9;"></div>
<div class="b" style="left:4px;top:914.6px;width:569px;height:1.2px;background:#c9c9c9;"></div>
<span class="t" style="left:31.37px;top:831.10px;font-size:15px;line-height:21px;color:#9a9a9a;letter-spacing:0.262px;">Name</span>
<span class="t" style="left:294.37px;top:831.10px;font-size:15px;line-height:21px;color:#9a9a9a;letter-spacing:-0.143px;">Pole Vectors</span>
<span class="t" style="left:31.37px;top:859.90px;font-size:15px;line-height:21px;color:#1b1b1b;letter-spacing:0.073px;">Pole Mode</span>
<span class="t" style="left:295.53px;top:859.90px;font-size:15px;line-height:21px;color:#1b1b1b;letter-spacing:-0.127px;">Vector</span>
<span class="t" style="left:31.92px;top:890.10px;font-size:15px;line-height:21px;color:#1b1b1b;letter-spacing:-0.441px;">Show Pole Planes</span>
<div class="b" style="left:416px;top:889.3px;width:21.6px;height:21.2px;background:#fff;border:1px solid #a9a9a9;border-radius:4px;box-sizing:border-box;"></div>
<svg class="b" style="left:575.5px;top:830px;" width="11" height="8" viewBox="0 0 11 8"><path d="M5.5 0.6 L10.4 7.4 H0.6 Z" fill="#d0d0d0"/></svg>
<svg class="b" style="left:575.5px;top:1196.2px;" width="11" height="8" viewBox="0 0 11 8"><path d="M5.5 7.4 L10.4 0.6 H0.6 Z" fill="#d0d0d0"/></svg>
<div class="b" style="left:2px;top:1214px;width:588px;height:120px;background:#fff;border:1px solid #e3e3e3;border-radius:9px;box-sizing:border-box;box-shadow:0 1px 1.5px rgba(0,0,0,.06);"></div>
<span class="t" style="left:12.60px;top:1222.80px;font-size:15px;line-height:21px;color:#8c8c8c;font-weight:700;letter-spacing:-0.023px;">Projection</span>
<span class="t" style="left:6.37px;top:1264.50px;font-size:15px;line-height:21px;color:#1b1b1b;letter-spacing:-0.023px;">Hemisphere:</span>
<div class="b" style="left:98px;top:1260.5px;width:486.5px;height:30px;background:#fff;border:1px solid #e0e0e0;border-bottom-color:#b3b3b3;border-radius:5px;box-sizing:border-box;"></div>
<span class="t" style="left:107.17px;top:1266.30px;font-size:15px;line-height:21px;color:#5c5c5c;letter-spacing:-0.073px;">Lower Hemisphere</span>
<svg class="b" style="left:559.95px;top:1271.25px;" width="12.5" height="7.5" viewBox="0 0 12.5 7.5"><path d="M1 1 L6.25 6.5 L11.5 1" fill="none" stroke="#4a4a4a" stroke-width="1.2" stroke-linecap="round" stroke-linejoin="round"/></svg>
<span class="t" style="left:6.37px;top:1303.10px;font-size:15px;line-height:21px;color:#1b1b1b;letter-spacing:0.103px;">Projection:</span>
<div class="b" style="left:98px;top:1299.5px;width:486.5px;height:30px;background:#fff;border:1px solid #e0e0e0;border-bottom-color:#b3b3b3;border-radius:5px;box-sizing:border-box;"></div>
<span class="t" style="left:107.17px;top:1305.50px;font-size:15px;line-height:21px;color:#5c5c5c;letter-spacing:-0.110px;">Equal Angle</span>
<svg class="b" style="left:559.95px;top:1310.25px;" width="12.5" height="7.5" viewBox="0 0 12.5 7.5"><path d="M1 1 L6.25 6.5 L11.5 1" fill="none" stroke="#4a4a4a" stroke-width="1.2" stroke-linecap="round" stroke-linejoin="round"/></svg>
<svg class="b" style="left:622.5px;top:240px;" width="27" height="23" viewBox="0 0 27 23"><rect x="0.7" y="0.7" width="25.6" height="21.3" fill="#deedf4" stroke="#2b7891" stroke-width="1.3"/><rect x="1.4" y="1.4" width="24.2" height="3.6" fill="#f7f7f7"/><path d="M0.7 5.3 H26.3" stroke="#2b7891" stroke-width="1.2"/><path d="M13.5 6 V21.5 M1.3 13.4 H25.7" stroke="#a9d6e6" stroke-width="1.1"/></svg>
<span class="t" style="left:654.27px;top:241.10px;font-size:15px;line-height:21px;color:#1b1b1b;letter-spacing:-0.176px;">Pole Data Grid</span>
<div class="b" style="left:595px;top:271px;width:1962px;height:1063.5px;background:#fafafa;border:1px solid #e4e4e4;border-radius:10px;box-sizing:border-box;"></div>
<div class="b" style="left:766px;top:231.5px;width:186px;height:42px;background:#fff;border:1px solid #e4e4e4;border-bottom:none;border-radius:9px 9px 0 0;box-sizing:border-box;"></div>
<div class="b" style="left:767px;top:270.5px;width:184px;height:1.6px;background:#f7f7f7;"></div>
<svg class="b" style="left:782.3px;top:237.6px;" width="27.4" height="27.4" viewBox="0 0 27.4 27.4"><circle cx="13.7" cy="13.7" r="13" fill="#dfeef4" stroke="#2f7d95" stroke-width="1.2"/><circle cx="15.2" cy="7.2" r="1.9" fill="#f4f8fa" stroke="#333" stroke-width="0.9"/><circle cx="7.6" cy="15" r="1.9" fill="#f4f8fa" stroke="#333" stroke-width="0.9"/><circle cx="17" cy="18.6" r="1.9" fill="#f4f8fa" stroke="#333" stroke-width="0.9"/></svg>
<span class="t" style="left:814.97px;top:241.10px;font-size:15px;line-height:21px;color:#111;font-weight:700;letter-spacing:-0.042px;">Stereonet 2D</span>
<svg class="b" style="left:930px;top:244.5px;" width="14" height="14" viewBox="0 0 14 14"><path d="M1 1 L13 13 M13 1 L1 13" stroke="#333" stroke-width="1.1"/></svg>
<div class="b" style="left:598px;top:274.5px;width:1955px;height:1028px;background:#fff;border:1px solid #e4e4e4;border-radius:9px;box-sizing:border-box;"></div>
<div class="b" style="left:2495.5px;top:237px;width:37px;height:29px;background:#fff;border:1px solid #e4e4e4;border-bottom-color:#c9c9c9;border-radius:6px;box-sizing:border-box;"></div>
<svg class="b" style="left:2506px;top:244.6px;" width="17" height="17" viewBox="0 0 17 17"><path d="M8.3 0.5 V16.2 M0.5 8.3 H16.2" stroke="#111" stroke-width="1.7"/></svg>
<svg class="b" style="left:2540.05px;top:248.25px;" width="12.5" height="7.5" viewBox="0 0 12.5 7.5"><path d="M1 1 L6.25 6.5 L11.5 1" fill="none" stroke="#bdbdbd" stroke-width="1.1" stroke-linecap="round" stroke-linejoin="round"/></svg>
<div class="b" style="left:599.8px;top:1305.8px;width:107.6px;height:28.7px;background:#fff;border:1px solid #e4e4e4;border-bottom:none;border-radius:9px 9px 0 0;box-sizing:border-box;"></div>
<span class="t" style="left:605.57px;top:1309.90px;font-size:15px;line-height:21px;color:#1b1b1b;letter-spacing:-0.152px;">Pole Data Grid</span>
<svg class="b" style="left:800px;top:280px" width="1040" height="1020" viewBox="800 280 1040 1020">
<defs><clipPath id="net"><circle cx="1320.5" cy="788.6" r="463.2"/></clipPath></defs>
<g clip-path="url(#net)">
<path d="M1138.4 346.3C1145.4 354.6 1156.4 352.3 1163.1 354.5C1169.8 356.7 1174.1 357.3 1178.7 359.7C1183.3 362.2 1187.0 365.0 1190.8 369.2C1194.5 373.4 1198.4 379.3 1201.2 384.8C1203.9 390.3 1206.1 396.6 1207.2 402.1C1208.4 407.6 1208.5 413.0 1208.1 417.6C1207.6 422.3 1205.9 425.4 1204.6 429.7C1203.3 434.1 1202.0 438.7 1200.3 443.6C1198.6 448.5 1197.0 454.0 1194.2 459.1C1191.5 464.3 1187.9 470.1 1183.9 474.7C1179.8 479.3 1174.9 483.6 1170.0 486.8C1165.1 490.0 1160.2 491.9 1154.5 493.7C1148.7 495.6 1141.2 496.9 1135.4 498.1C1129.7 499.2 1124.8 499.4 1119.9 500.7C1115.0 502.0 1110.4 503.4 1106.0 505.8C1101.7 508.3 1097.7 511.6 1093.9 515.4C1090.2 519.1 1087.0 523.6 1083.5 528.3C1080.1 533.1 1076.9 539.0 1073.2 543.9C1069.4 548.8 1065.4 553.7 1061.1 557.7C1056.7 561.8 1052.4 565.4 1047.2 568.1C1042.0 570.8 1035.7 572.9 1029.9 574.2C1024.2 575.5 1018.1 576.0 1012.6 575.9C1007.2 575.7 1002.3 574.9 997.1 573.3C991.9 571.7 986.4 569.5 981.5 566.4C976.6 563.2 971.7 558.9 967.7 554.3C963.6 549.7 960.0 543.6 957.3 538.7C954.6 533.8 952.7 529.0 951.2 524.9C949.7 520.7 949.9 519.7 948.3 513.6C946.7 507.6 948.0 496.8 941.7 488.5C935.4 480.1 912.1 472.1 910.4 463.7C908.8 455.3 924.5 446.5 932.0 438.2C939.4 429.9 947.1 421.9 955.1 414.1C963.0 406.4 971.3 398.9 979.7 391.6C988.1 384.4 996.8 377.4 1005.7 370.7C1014.6 364.0 1023.7 357.6 1033.0 351.5C1042.3 345.4 1051.8 339.6 1061.4 334.0C1071.1 328.5 1080.9 323.3 1090.9 318.5C1100.9 313.6 1113.4 300.1 1121.4 304.8C1129.3 309.4 1131.5 338.0 1138.4 346.3Z" fill="#e6eeff"/>
<path d="M1087.3 1216.3C1093.5 1208.2 1102.9 1203.2 1107.2 1199.6C1111.5 1196.0 1110.2 1196.9 1113.1 1194.8C1116.0 1192.7 1121.0 1190.2 1124.7 1187.0C1128.5 1183.7 1132.4 1179.9 1135.4 1175.3C1138.5 1170.8 1141.4 1164.9 1143.2 1159.8C1145.0 1154.6 1145.6 1149.4 1146.1 1144.2C1146.6 1139.0 1145.6 1133.5 1146.1 1128.6C1146.6 1123.8 1147.4 1118.9 1149.1 1115.0C1150.7 1111.1 1153.1 1107.5 1155.9 1105.3C1158.6 1103.1 1162.0 1102.0 1165.6 1101.8C1169.1 1101.6 1173.0 1103.1 1177.3 1104.3C1181.5 1105.6 1186.0 1108.0 1190.9 1109.2C1195.7 1110.4 1201.2 1111.7 1206.4 1111.5C1211.6 1111.4 1217.1 1110.1 1222.0 1108.2C1226.8 1106.4 1231.5 1103.8 1235.6 1100.4C1239.6 1097.0 1243.7 1092.5 1246.3 1087.8C1248.9 1083.1 1250.4 1077.4 1251.2 1072.2C1251.9 1067.1 1251.9 1061.9 1250.8 1056.7C1249.6 1051.5 1247.2 1046.3 1244.3 1041.1C1241.5 1035.9 1237.7 1030.4 1233.6 1025.6C1229.6 1020.7 1224.9 1016.2 1220.0 1012.0C1215.2 1007.7 1209.7 1003.9 1204.5 1000.3C1199.3 996.7 1194.1 993.3 1188.9 990.6C1183.7 987.8 1178.5 985.7 1173.4 983.8C1168.2 981.8 1163.0 980.7 1157.8 978.9C1152.6 977.1 1147.4 975.2 1142.2 973.1C1137.1 971.0 1131.9 968.4 1126.7 966.3C1121.5 964.1 1116.3 961.6 1111.1 960.4C1105.9 959.2 1100.4 958.8 1095.6 959.1C1090.7 959.3 1086.5 960.1 1082.0 961.8C1077.4 963.5 1072.9 966.0 1068.3 969.2C1063.8 972.3 1058.8 976.6 1054.7 980.8C1050.7 985.1 1047.1 989.6 1044.0 994.5C1041.0 999.3 1038.1 1004.8 1036.3 1010.0C1034.4 1015.2 1033.4 1020.7 1032.9 1025.6C1032.5 1030.4 1032.6 1034.6 1033.3 1039.2C1034.1 1043.7 1035.9 1048.3 1037.2 1052.8C1038.5 1057.3 1040.6 1061.9 1041.1 1066.4C1041.6 1070.9 1041.1 1075.5 1040.1 1080.0C1039.2 1084.6 1037.1 1089.1 1035.3 1093.6C1033.5 1098.2 1031.2 1103.0 1029.4 1107.3C1027.7 1111.5 1025.9 1115.4 1024.6 1118.9C1023.3 1122.5 1022.2 1124.8 1021.7 1128.6C1021.1 1132.5 1021.5 1135.7 1021.3 1142.3C1021.1 1148.9 1024.7 1158.8 1020.5 1168.2C1016.3 1177.7 994.2 1189.6 996.1 1199.1C998.1 1208.6 1019.7 1217.0 1032.0 1225.1C1044.3 1233.2 1060.8 1249.4 1070.0 1247.9C1079.2 1246.5 1081.1 1224.3 1087.3 1216.3Z" fill="#e6eeff"/>
<path d="M1527.4 687.8C1532.1 688.2 1537.7 689.2 1542.4 691.5C1547.1 693.9 1551.7 697.9 1555.5 701.8C1559.2 705.7 1562.7 710.3 1564.9 714.9C1567.0 719.6 1567.0 724.9 1568.6 729.9C1570.2 734.9 1572.0 740.2 1574.2 744.9C1576.4 749.6 1579.7 753.7 1581.7 758.0C1583.7 762.4 1585.6 766.5 1586.4 771.1C1587.2 775.8 1587.3 781.1 1586.4 786.1C1585.5 791.1 1583.4 796.6 1580.8 801.1C1578.1 805.6 1574.4 809.9 1570.5 813.3C1566.6 816.7 1561.7 819.8 1557.4 821.7C1553.0 823.6 1548.6 824.7 1544.2 824.5C1539.9 824.4 1535.2 822.5 1531.1 820.8C1527.1 819.1 1523.3 816.1 1519.9 814.2C1516.5 812.3 1513.5 810.5 1510.5 809.5C1507.6 808.6 1504.3 807.8 1502.1 808.6C1499.9 809.4 1499.8 812.7 1497.4 814.2C1495.1 815.8 1491.5 817.3 1488.0 818.0C1484.6 818.6 1480.1 818.6 1476.8 818.0C1473.5 817.3 1470.3 815.6 1468.4 814.2C1466.5 812.8 1465.6 811.1 1465.6 809.5C1465.6 808.0 1466.5 806.0 1468.4 804.9C1470.3 803.7 1473.5 802.9 1476.8 802.6C1480.1 802.3 1485.2 802.8 1488.0 803.0C1490.9 803.2 1492.9 805.2 1493.7 803.9C1494.4 802.7 1493.7 798.8 1492.7 795.5C1491.8 792.2 1489.8 788.3 1488.0 784.2C1486.3 780.2 1484.1 775.8 1482.4 771.1C1480.7 766.5 1478.4 761.1 1477.7 756.1C1477.1 751.2 1477.9 746.5 1478.7 741.2C1479.5 735.9 1480.6 729.6 1482.4 724.3C1484.3 719.0 1486.8 714.0 1489.9 709.3C1493.0 704.6 1497.1 699.6 1501.2 696.2C1505.2 692.8 1509.9 690.5 1514.3 689.1C1518.6 687.7 1522.7 687.4 1527.4 687.8Z" fill="#e6eeff"/>
<path d="M1713.4 1075.3C1704.5 1069.9 1696.5 1067.8 1689.6 1064.8C1682.8 1061.8 1678.1 1059.7 1672.3 1057.3C1666.6 1054.8 1660.8 1052.0 1655.0 1050.1C1649.3 1048.3 1643.5 1046.7 1637.7 1046.0C1632.0 1045.3 1626.2 1045.2 1620.4 1046.0C1614.7 1046.8 1608.6 1048.7 1603.2 1050.8C1597.8 1052.8 1592.3 1056.0 1588.0 1058.4C1583.7 1060.7 1580.1 1062.7 1577.2 1064.8C1574.3 1067.0 1572.7 1068.4 1570.7 1071.3C1568.8 1074.2 1567.1 1078.3 1565.3 1082.1C1563.5 1085.9 1562.3 1090.8 1559.9 1094.0C1557.6 1097.3 1554.9 1099.3 1551.3 1101.6C1547.7 1103.8 1541.9 1105.6 1538.3 1107.6C1534.7 1109.6 1531.8 1111.4 1529.7 1113.5C1527.6 1115.5 1526.2 1117.6 1525.8 1119.9C1525.4 1122.3 1525.7 1125.5 1527.1 1127.5C1528.4 1129.6 1531.8 1131.0 1534.0 1132.3C1536.2 1133.5 1538.9 1133.9 1540.5 1135.1C1542.1 1136.3 1544.1 1137.8 1543.7 1139.4C1543.4 1141.0 1541.0 1142.5 1538.3 1144.8C1535.6 1147.1 1531.1 1150.2 1527.5 1153.4C1523.9 1156.7 1520.3 1160.5 1516.7 1164.3C1513.1 1168.0 1508.8 1172.2 1505.9 1176.1C1503.0 1180.1 1501.4 1183.9 1499.4 1188.0C1497.4 1192.2 1495.8 1196.7 1494.0 1201.0C1492.2 1205.3 1489.9 1210.9 1488.6 1214.0C1487.3 1217.0 1488.4 1214.4 1486.4 1219.4C1484.5 1224.3 1476.1 1232.8 1476.8 1243.5C1477.5 1254.2 1483.2 1278.6 1490.5 1283.4C1497.8 1288.2 1510.5 1276.2 1520.3 1272.1C1530.2 1268.1 1539.9 1263.7 1549.4 1259.1C1559.0 1254.4 1568.4 1249.5 1577.7 1244.2C1586.9 1239.0 1596.0 1233.5 1604.9 1227.7C1613.8 1222.0 1622.6 1215.9 1631.2 1209.6C1639.7 1203.3 1648.1 1196.7 1656.2 1189.9C1664.4 1183.1 1672.3 1176.0 1680.0 1168.7C1687.8 1161.4 1695.3 1153.8 1702.5 1146.1C1709.8 1138.3 1716.8 1130.3 1723.6 1122.1C1730.4 1114.0 1744.9 1104.8 1743.2 1097.0C1741.5 1089.1 1722.4 1080.6 1713.4 1075.3Z" fill="#e6eeff"/>
<path d="M1530.2 361.7C1528.8 372.6 1540.1 379.9 1542.7 384.5C1545.3 389.1 1544.4 387.7 1545.5 389.6C1546.6 391.6 1547.9 393.9 1549.3 396.2C1550.7 398.5 1552.1 401.4 1554.0 403.7C1555.9 406.0 1558.0 408.2 1560.5 410.2C1563.0 412.2 1566.0 413.9 1569.0 415.8C1572.0 417.7 1575.5 419.9 1578.3 421.5C1581.1 423.1 1583.4 424.1 1585.8 425.2C1588.2 426.3 1589.8 427.1 1592.4 428.0C1595.1 428.9 1598.6 429.8 1601.7 430.4C1604.8 431.0 1609.1 431.5 1611.1 431.8C1613.1 432.1 1608.6 431.7 1613.5 432.2C1618.4 432.7 1631.0 440.0 1640.7 434.8C1650.4 429.5 1671.1 410.3 1671.6 400.7C1672.1 391.1 1653.2 384.6 1643.7 377.1C1634.1 369.6 1624.3 362.4 1614.2 355.6C1604.2 348.8 1593.8 342.3 1583.3 336.2C1572.8 330.1 1560.0 314.7 1551.2 319.0C1542.3 323.2 1531.6 350.8 1530.2 361.7Z" fill="#e6eeff"/>
<path d="M1070.1 896.6C1070.1 901.5 1069.3 906.6 1067.8 911.2C1066.3 915.9 1063.9 920.5 1061.1 924.4C1058.2 928.3 1054.5 932.0 1050.6 934.9C1046.7 937.7 1042.1 940.1 1037.4 941.6C1032.8 943.1 1027.7 943.9 1022.8 943.9C1017.9 943.9 1012.8 943.1 1008.2 941.6C1003.5 940.1 998.9 937.7 995.0 934.9C991.1 932.0 987.4 928.3 984.5 924.4C981.7 920.5 979.3 915.9 977.8 911.2C976.3 906.6 975.5 901.5 975.5 896.6C975.5 891.7 976.3 886.6 977.8 882.0C979.3 877.3 981.7 872.7 984.5 868.8C987.4 864.9 991.1 861.2 995.0 858.3C998.9 855.5 1003.5 853.1 1008.2 851.6C1012.8 850.1 1017.9 849.3 1022.8 849.3C1027.7 849.3 1032.8 850.1 1037.4 851.6C1042.1 853.1 1046.7 855.5 1050.6 858.3C1054.5 861.2 1058.2 864.9 1061.1 868.8C1063.9 872.7 1066.3 877.3 1067.8 882.0C1069.3 886.6 1070.1 891.7 1070.1 896.6Z" fill="#e6eeff"/>
<path d="M1124.0 353.4C1131.4 361.4 1142.8 358.1 1149.3 359.7C1155.8 361.3 1158.8 361.3 1163.1 363.2C1167.4 365.0 1171.5 367.3 1175.2 370.9C1179.0 374.5 1182.9 379.9 1185.6 384.8C1188.3 389.7 1190.3 395.2 1191.6 400.3C1192.9 405.5 1193.5 411.0 1193.4 415.9C1193.2 420.8 1192.1 424.8 1190.8 429.7C1189.5 434.6 1187.9 440.4 1185.6 445.3C1183.3 450.2 1180.4 454.5 1176.9 459.1C1173.5 463.8 1169.4 468.9 1164.8 473.0C1160.2 477.0 1154.5 480.8 1149.3 483.4C1144.1 486.0 1139.2 487.4 1133.7 488.5C1128.2 489.7 1121.9 489.8 1116.4 490.3C1110.9 490.7 1104.9 490.3 1100.8 491.1C1096.8 492.0 1094.8 493.0 1092.2 495.5C1089.6 497.9 1087.6 501.8 1085.3 505.8C1083.0 509.9 1081.0 515.1 1078.4 519.7C1075.8 524.3 1073.2 529.2 1069.7 533.5C1066.3 537.8 1061.9 542.2 1057.6 545.6C1053.3 549.1 1049.0 551.8 1043.8 554.3C1038.6 556.7 1032.2 559.2 1026.5 560.3C1020.7 561.5 1014.7 561.8 1009.2 561.2C1003.7 560.6 998.5 559.2 993.6 556.9C988.7 554.6 983.8 551.0 979.8 547.4C975.7 543.7 972.4 539.9 969.4 535.2C966.4 530.6 963.5 524.3 961.6 519.7C959.7 515.1 958.9 510.6 958.2 507.6C957.4 504.5 958.1 506.8 957.3 501.5C956.5 496.2 959.4 484.5 953.6 475.8C947.8 467.1 923.9 457.6 922.4 449.1C920.9 440.6 936.9 432.6 944.5 424.8C952.2 416.9 960.0 409.2 968.2 401.8C976.3 394.4 984.6 387.3 993.2 380.4C1001.8 373.6 1010.6 366.9 1019.5 360.6C1028.5 354.3 1037.7 348.3 1047.1 342.5C1056.4 336.8 1066.0 331.4 1075.7 326.2C1085.4 321.1 1097.2 307.2 1105.2 311.7C1113.3 316.3 1116.7 345.4 1124.0 353.4Z" fill="#ccf2ff"/>
<path d="M1076.0 1210.9C1082.2 1203.0 1091.0 1197.8 1095.6 1193.8C1100.1 1189.8 1100.1 1189.4 1103.3 1187.0C1106.6 1184.6 1111.5 1182.4 1115.0 1179.2C1118.6 1176.0 1122.0 1171.8 1124.7 1167.5C1127.5 1163.3 1129.8 1158.8 1131.5 1153.9C1133.3 1149.1 1134.6 1143.6 1135.4 1138.4C1136.2 1133.2 1136.2 1128.0 1136.4 1122.8C1136.6 1117.6 1135.8 1111.3 1136.4 1107.3C1137.1 1103.2 1138.0 1100.8 1140.3 1098.5C1142.6 1096.2 1146.1 1094.7 1150.0 1093.6C1153.9 1092.6 1158.8 1091.9 1163.6 1092.1C1168.5 1092.2 1174.0 1093.6 1179.2 1094.6C1184.4 1095.6 1189.6 1097.4 1194.8 1097.9C1199.9 1098.5 1205.4 1098.6 1210.3 1097.9C1215.2 1097.2 1220.0 1095.6 1223.9 1093.6C1227.8 1091.6 1231.1 1089.1 1233.6 1085.9C1236.2 1082.6 1238.3 1078.4 1239.5 1074.2C1240.7 1070.0 1241.4 1065.3 1241.0 1060.6C1240.7 1055.9 1239.4 1050.9 1237.5 1046.0C1235.7 1041.1 1233.0 1036.1 1229.8 1031.4C1226.5 1026.7 1222.3 1021.8 1218.1 1017.8C1213.9 1013.7 1209.3 1010.5 1204.5 1007.1C1199.6 1003.7 1194.1 1000.2 1188.9 997.4C1183.7 994.6 1178.5 992.3 1173.4 990.2C1168.2 988.1 1163.0 986.6 1157.8 984.7C1152.6 982.8 1147.4 980.8 1142.2 978.9C1137.1 977.0 1131.9 974.8 1126.7 973.1C1121.5 971.3 1116.3 969.3 1111.1 968.2C1105.9 967.1 1100.4 965.9 1095.6 966.3C1090.7 966.6 1086.3 968.2 1082.0 970.1C1077.6 972.1 1073.4 974.8 1069.3 977.9C1065.3 981.0 1061.1 984.6 1057.6 988.6C1054.2 992.7 1051.1 997.4 1048.9 1002.2C1046.7 1007.1 1045.3 1012.9 1044.6 1017.8C1044.0 1022.7 1044.1 1026.9 1045.0 1031.4C1045.9 1035.9 1047.9 1040.8 1049.9 1045.0C1051.8 1049.2 1055.0 1052.8 1056.7 1056.7C1058.4 1060.6 1060.0 1064.8 1060.2 1068.4C1060.3 1071.9 1059.0 1074.5 1057.6 1078.1C1056.3 1081.6 1053.9 1085.5 1051.8 1089.7C1049.7 1094.0 1047.3 1098.8 1045.0 1103.4C1042.7 1107.9 1040.0 1112.4 1038.2 1117.0C1036.4 1121.5 1035.0 1126.4 1034.3 1130.6C1033.7 1134.8 1034.3 1138.6 1034.3 1142.3C1034.3 1146.0 1034.3 1146.7 1034.3 1152.8C1034.3 1158.8 1038.2 1169.1 1034.3 1178.8C1030.4 1188.4 1007.0 1200.0 1011.0 1210.5C1015.1 1220.9 1047.5 1241.3 1058.4 1241.4C1069.2 1241.5 1069.8 1218.8 1076.0 1210.9Z" fill="#ccf2ff"/>
<path d="M1519.9 703.7C1524.0 703.9 1528.6 704.3 1533.0 706.5C1537.4 708.7 1542.4 712.9 1546.1 716.8C1549.9 720.7 1552.7 725.2 1555.5 729.9C1558.3 734.6 1560.5 740.2 1563.0 744.9C1565.5 749.6 1568.1 753.7 1570.5 758.0C1572.8 762.4 1575.8 766.5 1577.0 771.1C1578.3 775.8 1578.7 781.1 1578.0 786.1C1577.2 791.1 1574.8 797.1 1572.3 801.1C1569.9 805.2 1566.7 808.0 1563.0 810.5C1559.2 813.0 1554.2 815.5 1549.9 816.1C1545.5 816.7 1541.1 815.8 1536.8 814.2C1532.4 812.7 1527.7 809.5 1523.6 806.7C1519.6 803.9 1515.5 800.8 1512.4 797.4C1509.3 793.9 1507.1 790.5 1504.9 786.1C1502.7 781.8 1501.2 776.1 1499.3 771.1C1497.4 766.1 1494.7 761.1 1493.7 756.1C1492.6 751.2 1493.1 746.2 1493.1 741.2C1493.1 736.2 1492.6 730.9 1493.7 726.2C1494.7 721.5 1496.8 716.5 1499.3 713.1C1501.8 709.6 1505.2 707.1 1508.7 705.6C1512.1 704.0 1515.8 703.5 1519.9 703.7Z" fill="#ccf2ff"/>
<path d="M1706.5 1072.3C1696.3 1068.8 1687.4 1076.1 1681.0 1077.4C1674.5 1078.7 1672.7 1078.6 1668.0 1080.0C1663.3 1081.3 1657.9 1083.2 1652.9 1085.4C1647.8 1087.5 1642.4 1090.2 1637.7 1092.9C1633.1 1095.6 1628.7 1098.5 1624.8 1101.6C1620.8 1104.6 1617.6 1108.4 1614.0 1111.3C1610.4 1114.2 1606.4 1116.7 1603.2 1118.9C1599.9 1121.0 1596.5 1122.1 1594.5 1124.3C1592.5 1126.4 1592.2 1128.8 1591.3 1131.8C1590.4 1134.9 1590.4 1139.4 1589.1 1142.6C1587.8 1145.9 1586.4 1148.8 1583.7 1151.3C1581.0 1153.8 1576.9 1156.1 1572.9 1157.8C1568.9 1159.4 1563.9 1159.9 1559.9 1161.0C1556.0 1162.1 1552.7 1162.8 1549.1 1164.3C1545.5 1165.7 1541.9 1167.5 1538.3 1169.7C1534.7 1171.8 1531.1 1174.2 1527.5 1177.2C1523.9 1180.3 1519.8 1184.4 1516.7 1188.0C1513.6 1191.6 1511.3 1195.6 1509.1 1198.8C1507.0 1202.1 1505.2 1205.1 1503.7 1207.5C1502.3 1209.8 1503.3 1208.3 1500.5 1212.9C1497.7 1217.5 1486.6 1224.2 1487.1 1235.2C1487.6 1246.2 1495.5 1273.7 1503.4 1278.8C1511.3 1283.9 1524.3 1270.6 1534.6 1266.0C1544.8 1261.4 1554.9 1256.5 1564.9 1251.2C1574.8 1246.0 1584.6 1240.4 1594.1 1234.5C1603.7 1228.7 1613.1 1222.5 1622.3 1216.0C1631.5 1209.5 1640.4 1202.7 1649.2 1195.7C1657.9 1188.6 1666.4 1181.3 1674.7 1173.7C1683.0 1166.1 1691.0 1158.2 1698.8 1150.1C1706.5 1141.9 1714.0 1133.6 1721.3 1125.0C1728.5 1116.4 1744.5 1107.2 1742.1 1098.5C1739.6 1089.7 1716.6 1075.8 1706.5 1072.3Z" fill="#ccf2ff"/>
<path d="M1555.0 373.0C1553.6 384.1 1565.8 394.1 1569.5 399.5C1573.2 404.9 1574.2 403.7 1577.0 405.5C1579.8 407.3 1582.9 408.9 1586.0 410.5C1589.1 412.1 1589.2 413.6 1595.5 415.2C1601.8 416.8 1614.4 425.4 1624.0 420.4C1633.7 415.3 1654.5 395.4 1653.3 384.9C1652.1 374.4 1629.2 365.9 1616.6 357.2C1604.0 348.6 1587.9 330.3 1577.6 332.9C1567.3 335.5 1556.3 361.9 1555.0 373.0Z" fill="#ccf2ff"/>
<path d="M1042.5 895.5C1042.5 898.2 1041.8 901.1 1040.7 903.5C1039.5 905.9 1037.6 908.3 1035.5 910.0C1033.4 911.6 1030.7 912.9 1028.1 913.5C1025.5 914.1 1022.5 914.1 1019.9 913.5C1017.3 912.9 1014.6 911.6 1012.5 910.0C1010.4 908.3 1008.5 905.9 1007.3 903.5C1006.2 901.1 1005.5 898.2 1005.5 895.5C1005.5 892.8 1006.2 889.9 1007.3 887.5C1008.5 885.1 1010.4 882.7 1012.5 881.0C1014.6 879.4 1017.3 878.1 1019.9 877.5C1022.5 876.9 1025.5 876.9 1028.1 877.5C1030.7 878.1 1033.4 879.4 1035.5 881.0C1037.6 882.7 1039.5 885.1 1040.7 887.5C1041.8 889.9 1042.5 892.8 1042.5 895.5Z" fill="#ccf2ff"/>
<path d="M1113.1 360.8C1120.9 368.5 1132.3 363.2 1138.9 364.0C1145.5 364.9 1148.1 364.0 1152.7 365.8C1157.3 367.5 1162.5 370.7 1166.6 374.4C1170.6 378.1 1174.3 383.6 1176.9 388.2C1179.5 392.8 1181.0 397.2 1182.1 402.1C1183.3 407.0 1184.1 412.5 1183.9 417.6C1183.6 422.8 1182.1 428.0 1180.4 433.2C1178.7 438.4 1176.4 443.9 1173.5 448.8C1170.6 453.7 1167.1 458.6 1163.1 462.6C1159.1 466.6 1154.2 470.2 1149.3 473.0C1144.4 475.7 1138.9 477.7 1133.7 479.0C1128.5 480.3 1123.3 480.6 1118.1 480.8C1113.0 480.9 1107.5 480.2 1102.6 479.9C1097.7 479.6 1092.2 478.5 1088.7 479.0C1085.3 479.6 1083.8 480.6 1081.8 483.4C1079.8 486.1 1078.4 491.1 1076.6 495.5C1074.9 499.8 1073.7 504.7 1071.4 509.3C1069.1 513.9 1066.3 518.8 1062.8 523.1C1059.3 527.5 1055.0 532.1 1050.7 535.2C1046.4 538.4 1041.8 540.4 1036.9 542.2C1032.0 543.9 1026.5 545.3 1021.3 545.6C1016.1 545.9 1010.6 545.3 1005.7 543.9C1000.8 542.5 996.2 540.1 991.9 537.0C987.6 533.8 983.2 529.2 979.8 524.9C976.3 520.5 973.4 515.4 971.1 511.0C968.8 506.7 967.1 501.8 965.9 498.9C964.8 496.0 965.9 498.7 964.2 493.7C962.6 488.8 962.2 477.4 956.0 469.1C949.8 460.7 927.9 452.2 927.1 443.7C926.2 435.3 942.7 426.5 950.9 418.3C959.1 410.1 967.6 402.1 976.4 394.5C985.1 386.9 994.1 379.5 1003.3 372.5C1012.6 365.4 1022.1 358.7 1031.7 352.3C1041.4 345.9 1051.3 339.8 1061.4 334.0C1071.5 328.3 1083.6 313.4 1092.3 317.8C1100.9 322.3 1105.3 353.1 1113.1 360.8Z" fill="#b3fff0"/>
<path d="M1095.6 971.1C1100.3 970.1 1105.9 971.9 1111.1 973.1C1116.3 974.2 1121.5 976.1 1126.7 977.9C1131.9 979.7 1137.1 981.8 1142.2 983.8C1147.4 985.7 1152.6 987.5 1157.8 989.6C1163.0 991.7 1168.2 993.8 1173.4 996.4C1178.5 999.0 1184.1 1001.9 1188.9 1005.1C1193.8 1008.4 1198.6 1012.1 1202.5 1015.8C1206.4 1019.6 1209.8 1023.3 1212.3 1027.5C1214.7 1031.7 1216.4 1036.6 1217.1 1041.1C1217.8 1045.7 1217.5 1050.5 1216.5 1054.7C1215.6 1059.0 1213.8 1062.8 1211.3 1066.4C1208.8 1070.0 1205.3 1073.4 1201.6 1076.1C1197.8 1078.9 1193.3 1081.4 1188.9 1082.9C1184.5 1084.5 1179.8 1085.1 1175.3 1085.5C1170.8 1085.8 1166.6 1085.3 1161.7 1084.9C1156.8 1084.5 1151.0 1083.1 1146.1 1082.9C1141.3 1082.8 1136.2 1083.1 1132.5 1083.9C1128.8 1084.7 1125.6 1086.2 1123.8 1087.8C1122.0 1089.4 1121.7 1091.4 1121.8 1093.6C1122.0 1095.9 1124.3 1098.8 1124.7 1101.4C1125.2 1104.0 1125.7 1106.8 1124.7 1109.2C1123.8 1111.6 1121.5 1114.2 1118.9 1116.0C1116.3 1117.8 1112.7 1119.1 1109.2 1119.9C1105.6 1120.6 1101.4 1121.1 1097.5 1120.5C1093.6 1119.8 1089.4 1118.0 1085.8 1116.0C1082.3 1114.0 1078.7 1111.0 1076.1 1108.2C1073.5 1105.5 1071.6 1102.4 1070.3 1099.5C1069.0 1096.6 1068.2 1093.5 1068.3 1090.7C1068.5 1088.0 1070.0 1085.0 1071.3 1082.9C1072.6 1080.8 1076.3 1080.5 1076.1 1078.1C1076.0 1075.6 1072.7 1071.9 1070.3 1068.4C1067.9 1064.8 1064.0 1060.9 1061.5 1056.7C1059.1 1052.5 1057.0 1047.6 1055.7 1043.1C1054.4 1038.5 1053.8 1034.0 1053.8 1029.5C1053.8 1024.9 1054.4 1020.4 1055.7 1015.8C1057.0 1011.3 1058.9 1006.6 1061.5 1002.2C1064.1 997.9 1067.7 993.5 1071.3 989.6C1074.8 985.7 1078.9 982.0 1082.9 978.9C1087.0 975.8 1090.9 972.1 1095.6 971.1Z" fill="#b3fff0"/>
<path d="M1529.3 732.2C1533.0 731.4 1536.8 731.7 1540.5 732.7C1544.2 733.8 1548.8 735.9 1551.7 738.4C1554.7 740.8 1557.1 744.1 1558.3 747.7C1559.5 751.3 1559.9 755.8 1559.2 759.9C1558.6 764.0 1556.9 768.3 1554.6 772.1C1552.2 775.8 1548.8 779.7 1545.2 782.4C1541.6 785.0 1537.2 787.0 1533.0 788.0C1528.8 789.0 1523.6 789.5 1519.9 788.6C1516.1 787.6 1512.7 785.3 1510.5 782.4C1508.3 779.5 1507.3 774.9 1506.8 771.1C1506.2 767.4 1506.5 763.8 1507.2 759.9C1507.8 756.0 1508.7 751.5 1510.5 747.7C1512.3 744.0 1514.9 740.0 1518.0 737.4C1521.1 734.8 1525.5 732.9 1529.3 732.2Z" fill="#b3fff0"/>
<path d="M1697.3 1081.5C1686.9 1078.2 1677.7 1087.9 1671.2 1090.3C1664.7 1092.8 1662.2 1093.8 1658.3 1096.2C1654.3 1098.6 1650.7 1101.4 1647.5 1104.8C1644.2 1108.2 1641.9 1112.6 1638.8 1116.7C1635.8 1120.8 1632.5 1125.5 1629.1 1129.7C1625.7 1133.8 1621.9 1134.9 1618.3 1141.6C1614.7 1148.2 1604.7 1159.0 1607.6 1169.8C1610.4 1180.6 1626.1 1204.0 1635.2 1206.5C1644.3 1209.0 1653.4 1192.4 1662.2 1184.8C1670.9 1177.3 1679.4 1169.5 1687.6 1161.4C1695.8 1153.3 1703.8 1144.9 1711.5 1136.3C1719.1 1127.7 1735.9 1118.8 1733.6 1109.7C1731.2 1100.6 1707.6 1084.7 1697.3 1081.5Z" fill="#b3fff0"/>
<path d="M1598.9 1175.9C1590.0 1169.5 1579.4 1175.0 1572.9 1174.6C1566.4 1174.3 1564.3 1173.5 1559.9 1174.0C1555.6 1174.4 1551.3 1175.4 1547.0 1177.2C1542.6 1179.0 1538.0 1181.9 1534.0 1184.8C1530.0 1187.7 1526.3 1191.3 1523.2 1194.5C1520.1 1197.8 1517.4 1202.0 1515.6 1204.2C1513.8 1206.5 1515.5 1203.3 1512.4 1207.9C1509.3 1212.5 1496.7 1220.8 1497.0 1232.0C1497.3 1243.1 1506.3 1269.7 1514.0 1274.7C1521.7 1279.7 1533.7 1266.5 1543.3 1262.0C1552.9 1257.4 1562.5 1252.6 1571.8 1247.5C1581.1 1242.4 1590.3 1237.0 1599.3 1231.3C1608.3 1225.6 1625.9 1222.7 1625.8 1213.5C1625.8 1204.2 1607.7 1182.4 1598.9 1175.9Z" fill="#b3fff0"/>
<path d="M1101.1 364.8C1102.0 375.6 1089.1 383.2 1085.3 388.2C1081.5 393.3 1081.2 392.3 1078.4 395.2C1075.5 398.0 1071.2 401.5 1068.0 405.5C1064.8 409.6 1061.5 415.0 1059.3 419.4C1057.2 423.7 1055.9 427.7 1055.0 431.5C1054.1 435.2 1054.9 439.1 1054.1 441.9C1053.4 444.6 1053.6 446.5 1050.7 447.9C1047.8 449.3 1042.3 450.2 1036.9 450.5C1031.4 450.8 1023.6 449.3 1017.8 449.6C1012.1 450.0 1009.1 451.3 1002.3 452.6C995.4 453.9 986.5 461.9 976.7 457.4C967.0 452.9 948.1 432.0 943.7 425.6C939.3 419.2 943.5 414.6 950.1 419.1C956.8 423.5 979.1 442.6 983.5 452.3C987.8 462.0 977.8 472.1 976.3 477.3C974.8 482.5 974.9 480.9 974.6 483.4C974.3 485.8 973.7 489.1 974.6 492.0C975.5 494.9 976.9 497.8 979.8 500.7C982.7 503.5 987.6 506.7 991.9 509.3C996.2 511.9 1001.1 514.2 1005.7 516.2C1010.3 518.2 1014.9 520.3 1019.6 521.4C1024.2 522.6 1028.8 523.4 1033.4 523.1C1038.0 522.9 1043.2 521.4 1047.2 519.7C1051.3 518.0 1054.9 515.4 1057.6 512.8C1060.3 510.2 1062.5 507.0 1063.7 504.1C1064.8 501.2 1064.5 498.9 1064.5 495.5C1064.5 492.0 1063.2 487.1 1063.7 483.4C1064.1 479.6 1065.5 475.9 1067.1 473.0C1068.7 470.1 1070.7 467.5 1073.2 466.1C1075.6 464.6 1078.6 464.2 1081.8 464.3C1085.0 464.5 1088.2 465.5 1092.2 466.9C1096.2 468.4 1101.4 471.5 1106.0 473.0C1110.6 474.4 1115.0 475.6 1119.9 475.6C1124.8 475.6 1130.2 474.9 1135.4 473.0C1140.6 471.1 1146.4 468.1 1151.0 464.3C1155.6 460.6 1159.8 455.4 1163.1 450.5C1166.4 445.6 1169.0 440.4 1170.9 434.9C1172.8 429.5 1174.1 423.1 1174.3 417.6C1174.6 412.2 1174.2 407.0 1172.6 402.1C1171.0 397.2 1168.2 392.3 1164.8 388.2C1161.5 384.2 1157.1 380.5 1152.7 377.9C1148.4 375.3 1143.4 374.0 1138.9 372.7C1134.4 371.4 1132.3 371.4 1125.9 370.1C1119.5 368.8 1108.2 372.6 1100.4 365.0C1092.7 357.4 1082.7 331.1 1079.3 324.3C1075.9 317.5 1076.3 317.2 1079.9 324.0C1083.5 330.7 1100.2 354.1 1101.1 364.8Z" fill="#99ffc4"/>
<path d="M1095.6 975.0C1100.8 973.9 1105.9 975.8 1111.1 977.0C1116.3 978.1 1121.5 979.9 1126.7 981.8C1131.9 983.8 1137.1 986.2 1142.2 988.6C1147.4 991.1 1152.6 993.6 1157.8 996.4C1163.0 999.2 1168.5 1002.1 1173.4 1005.1C1178.2 1008.2 1183.1 1011.5 1187.0 1014.9C1190.9 1018.3 1194.1 1021.8 1196.7 1025.6C1199.3 1029.3 1201.4 1033.3 1202.5 1037.2C1203.7 1041.1 1204.2 1045.0 1203.5 1048.9C1202.9 1052.8 1201.1 1057.2 1198.6 1060.6C1196.2 1064.0 1192.5 1067.1 1188.9 1069.3C1185.4 1071.6 1181.5 1073.1 1177.3 1074.2C1173.0 1075.3 1168.2 1076.1 1163.6 1076.1C1159.1 1076.1 1154.6 1074.8 1150.0 1074.2C1145.5 1073.5 1140.9 1072.4 1136.4 1072.2C1131.9 1072.1 1127.0 1072.6 1122.8 1073.2C1118.6 1073.9 1114.0 1075.0 1111.1 1076.1C1108.2 1077.3 1106.3 1078.2 1105.3 1080.0C1104.3 1081.8 1106.1 1085.0 1105.3 1086.8C1104.5 1088.6 1102.5 1089.8 1100.4 1090.7C1098.3 1091.6 1094.9 1092.4 1092.7 1092.1C1090.4 1091.8 1088.0 1090.5 1086.8 1088.8C1085.6 1087.1 1085.8 1084.1 1085.5 1082.0C1085.1 1079.9 1085.6 1078.1 1084.9 1076.1C1084.1 1074.2 1083.1 1072.9 1081.0 1070.3C1078.9 1067.7 1075.0 1064.1 1072.2 1060.6C1069.5 1057.0 1066.4 1053.1 1064.5 1048.9C1062.5 1044.7 1061.4 1039.8 1060.6 1035.3C1059.8 1030.8 1059.3 1026.2 1059.6 1021.7C1059.9 1017.1 1060.9 1012.4 1062.5 1008.1C1064.1 1003.7 1066.4 999.5 1069.3 995.4C1072.2 991.4 1075.6 987.2 1080.0 983.8C1084.4 980.4 1090.4 976.1 1095.6 975.0Z" fill="#99ffc4"/>
<path d="M1537.7 743.0C1540.8 742.9 1544.2 743.5 1546.1 744.9C1548.1 746.3 1549.5 749.0 1549.5 751.5C1549.5 754.0 1548.2 757.4 1546.1 759.9C1544.0 762.4 1540.2 764.9 1536.8 766.5C1533.3 768.0 1528.6 769.3 1525.5 769.3C1522.4 769.3 1519.6 768.0 1518.0 766.5C1516.4 764.9 1515.6 762.2 1515.8 759.9C1515.9 757.6 1517.0 754.7 1519.0 752.4C1520.9 750.1 1524.3 747.4 1527.4 745.8C1530.5 744.3 1534.6 743.2 1537.7 743.0Z" fill="#99ffc4"/>
<path d="M1106.0 383.9C1111.2 382.3 1115.3 382.2 1119.9 382.2C1124.5 382.2 1129.1 382.5 1133.7 383.9C1138.3 385.4 1143.5 387.8 1147.5 390.8C1151.6 393.9 1155.3 397.9 1157.9 402.1C1160.5 406.3 1162.4 411.3 1163.1 415.9C1163.8 420.5 1163.3 425.1 1162.2 429.7C1161.2 434.4 1159.5 439.3 1157.1 443.6C1154.6 447.9 1151.4 452.1 1147.5 455.7C1143.6 459.3 1138.3 463.0 1133.7 465.2C1129.1 467.4 1124.5 468.6 1119.9 469.2C1115.3 469.8 1110.4 469.5 1106.0 468.7C1101.7 467.9 1097.7 466.2 1093.9 464.3C1090.2 462.5 1086.7 460.3 1083.5 457.4C1080.4 454.5 1077.4 450.8 1074.9 447.0C1072.5 443.3 1070.3 439.0 1068.8 434.9C1067.4 430.9 1066.3 426.6 1066.3 422.8C1066.3 419.1 1067.1 415.9 1068.8 412.5C1070.6 409.0 1073.3 405.5 1076.6 402.1C1079.9 398.6 1083.8 394.7 1088.7 391.7C1093.6 388.7 1100.8 385.5 1106.0 383.9Z" fill="#80ff80"/>
<path d="M1003.1 474.7C1003.8 473.3 1005.0 471.4 1006.6 470.4C1008.2 469.4 1010.8 468.5 1012.6 468.7C1014.5 468.8 1016.9 470.0 1017.8 471.3C1018.8 472.6 1018.8 474.7 1018.2 476.4C1017.6 478.2 1016.0 480.3 1014.4 481.6C1012.7 482.9 1010.1 483.9 1008.3 484.2C1006.5 484.5 1004.7 484.2 1003.6 483.4C1002.6 482.5 1002.3 480.5 1002.3 479.0C1002.2 477.6 1002.4 476.2 1003.1 474.7Z" fill="#80ff80"/>
<path d="M1101.4 980.8C1105.3 980.4 1110.5 980.4 1115.0 981.2C1119.6 982.0 1124.1 983.7 1128.6 985.7C1133.2 987.7 1138.0 990.7 1142.2 993.5C1146.5 996.2 1150.0 999.0 1153.9 1002.2C1157.8 1005.5 1162.0 1009.4 1165.6 1012.9C1169.1 1016.5 1172.7 1019.9 1175.3 1023.6C1177.9 1027.4 1179.9 1031.4 1181.1 1035.3C1182.4 1039.2 1183.2 1043.2 1182.7 1047.0C1182.2 1050.7 1180.4 1054.6 1178.2 1057.7C1176.0 1060.7 1172.9 1063.8 1169.5 1065.4C1166.1 1067.1 1161.7 1067.5 1157.8 1067.4C1153.9 1067.2 1150.0 1065.1 1146.1 1064.5C1142.2 1063.8 1138.7 1063.2 1134.5 1063.5C1130.3 1063.8 1125.4 1065.5 1120.9 1066.0C1116.3 1066.5 1111.8 1067.0 1107.2 1066.4C1102.7 1065.8 1097.8 1064.5 1093.6 1062.5C1089.4 1060.6 1085.5 1057.8 1082.0 1054.7C1078.4 1051.7 1074.7 1047.9 1072.2 1044.0C1069.8 1040.2 1068.2 1035.8 1067.4 1031.4C1066.6 1027.0 1066.6 1022.3 1067.4 1017.8C1068.2 1013.3 1070.0 1008.4 1072.2 1004.2C1074.5 1000.0 1077.7 995.9 1081.0 992.5C1084.2 989.1 1088.3 985.7 1091.7 983.8C1095.1 981.8 1097.5 981.3 1101.4 980.8Z" fill="#80ff80"/>
<path d="M1113.0 396.9C1116.7 396.9 1121.3 397.7 1125.1 399.5C1128.8 401.2 1132.6 404.2 1135.4 407.3C1138.3 410.3 1140.9 413.9 1142.4 417.6C1143.8 421.4 1144.4 425.7 1144.1 429.7C1143.8 433.8 1142.6 438.0 1140.6 441.9C1138.6 445.7 1135.4 450.2 1132.0 453.1C1128.5 456.0 1123.9 457.9 1119.9 459.1C1115.8 460.4 1111.8 461.1 1107.8 460.5C1103.7 460.0 1099.1 457.9 1095.7 455.7C1092.2 453.4 1089.2 450.2 1087.0 447.0C1084.8 443.9 1083.6 440.1 1082.7 436.7C1081.8 433.2 1081.2 429.7 1081.5 426.3C1081.8 422.8 1082.6 419.2 1084.4 415.9C1086.2 412.6 1089.2 409.1 1092.2 406.4C1095.2 403.7 1099.1 401.1 1102.6 399.5C1106.0 397.9 1109.2 396.9 1113.0 396.9Z" fill="#a6ff66"/>
<path d="M1103.3 986.7C1106.9 986.6 1112.4 986.5 1117.0 987.6C1121.5 988.8 1126.4 991.1 1130.6 993.5C1134.8 995.9 1138.7 999.0 1142.2 1002.2C1145.8 1005.5 1149.1 1009.4 1152.0 1012.9C1154.9 1016.5 1157.5 1019.9 1159.7 1023.6C1162.0 1027.4 1164.3 1031.6 1165.6 1035.3C1166.8 1039.0 1167.5 1042.9 1167.1 1046.0C1166.8 1049.1 1165.5 1052.0 1163.6 1053.8C1161.8 1055.6 1158.8 1056.4 1155.9 1056.7C1152.9 1057.0 1149.4 1055.6 1146.1 1055.7C1142.9 1055.9 1140.0 1056.7 1136.4 1057.7C1132.8 1058.6 1129.0 1060.9 1124.7 1061.5C1120.5 1062.2 1115.7 1062.4 1111.1 1061.5C1106.6 1060.7 1101.7 1058.8 1097.5 1056.7C1093.3 1054.6 1089.2 1052.1 1085.8 1048.9C1082.4 1045.7 1079.2 1041.1 1077.1 1037.2C1075.0 1033.3 1073.7 1029.5 1073.2 1025.6C1072.7 1021.7 1073.2 1017.8 1074.2 1013.9C1075.1 1010.0 1076.8 1005.8 1079.0 1002.2C1081.3 998.7 1085.0 994.8 1087.8 992.5C1090.5 990.2 1093.0 989.2 1095.6 988.2C1098.2 987.3 1099.8 986.8 1103.3 986.7Z" fill="#a6ff66"/>
<path d="M1107.2 995.4C1111.1 995.1 1115.0 995.6 1118.9 996.4C1122.8 997.2 1127.0 998.3 1130.6 1000.3C1134.1 1002.2 1137.5 1005.1 1140.3 1008.1C1143.1 1011.0 1145.3 1014.4 1147.1 1017.8C1148.9 1021.2 1150.5 1024.9 1151.0 1028.5C1151.5 1032.1 1151.0 1036.1 1150.0 1039.2C1149.1 1042.3 1147.4 1044.7 1145.2 1047.0C1142.9 1049.2 1139.8 1051.2 1136.4 1052.8C1133.0 1054.4 1128.6 1055.7 1124.7 1056.3C1120.9 1056.9 1117.0 1057.0 1113.1 1056.3C1109.2 1055.6 1105.1 1053.9 1101.4 1051.8C1097.7 1049.8 1093.8 1047.0 1090.7 1044.0C1087.6 1041.1 1084.8 1037.7 1082.9 1034.3C1081.1 1030.9 1079.9 1027.2 1079.6 1023.6C1079.3 1020.1 1079.8 1016.2 1081.0 1012.9C1082.2 1009.7 1084.4 1006.6 1086.8 1004.2C1089.2 1001.7 1092.2 999.8 1095.6 998.3C1099.0 996.9 1103.3 995.8 1107.2 995.4Z" fill="#e0ff4d"/>
<path d="M1113.1 1006.1C1116.8 1005.7 1121.2 1005.2 1124.7 1005.7C1128.3 1006.2 1131.7 1007.4 1134.5 1009.0C1137.2 1010.7 1139.6 1013.1 1141.3 1015.8C1143.0 1018.6 1144.3 1022.2 1144.6 1025.6C1144.9 1029.0 1144.3 1033.0 1143.2 1036.3C1142.2 1039.5 1140.6 1042.5 1138.4 1045.0C1136.1 1047.5 1132.8 1049.7 1129.6 1051.2C1126.4 1052.8 1122.6 1054.1 1118.9 1054.4C1115.2 1054.6 1110.8 1053.9 1107.2 1052.8C1103.7 1051.7 1100.4 1050.0 1097.5 1047.9C1094.6 1045.8 1091.6 1043.1 1089.7 1040.2C1087.9 1037.2 1086.6 1033.7 1086.2 1030.4C1085.9 1027.2 1086.6 1023.6 1087.8 1020.7C1089.0 1017.8 1091.2 1015.0 1093.6 1012.9C1096.1 1010.8 1099.1 1009.2 1102.4 1008.1C1105.6 1006.9 1109.3 1006.5 1113.1 1006.1Z" fill="#ffd333"/>
<path d="M1118.9 1014.9C1122.0 1014.3 1125.9 1012.9 1128.6 1012.9C1131.4 1012.9 1133.7 1013.4 1135.4 1014.9C1137.2 1016.3 1138.7 1019.1 1139.3 1021.7C1140.0 1024.3 1139.8 1027.5 1139.3 1030.4C1138.8 1033.3 1138.0 1036.8 1136.4 1039.2C1134.8 1041.6 1132.4 1043.6 1129.6 1045.0C1126.8 1046.5 1123.1 1047.6 1119.9 1047.9C1116.6 1048.3 1113.1 1047.9 1110.2 1047.0C1107.2 1046.0 1104.4 1044.0 1102.4 1042.1C1100.3 1040.2 1098.6 1037.7 1097.9 1035.3C1097.2 1032.9 1097.2 1029.9 1097.9 1027.5C1098.6 1025.1 1100.3 1022.6 1102.4 1020.7C1104.4 1018.9 1107.4 1017.4 1110.2 1016.4C1112.9 1015.5 1115.8 1015.5 1118.9 1014.9Z" fill="#ff0000"/>
</g>
<g fill="#fff" stroke="#7d7d7d" stroke-width="0.8"><path d="M1230.3 377.7L1234.8 382.2L1230.3 386.7L1225.8 382.2Z"/><path d="M1121.4 401.7L1125.9 406.2L1121.4 410.7L1116.9 406.2Z"/><path d="M1095.4 416.3L1099.9 420.8L1095.4 425.3L1090.9 420.8Z"/><path d="M1128.2 414.8L1132.7 419.3L1128.2 423.8L1123.7 419.3Z"/><path d="M1147.6 437.0L1152.1 441.5L1147.6 446.0L1143.1 441.5Z"/><path d="M1096.7 458.6L1101.2 463.1L1096.7 467.6L1092.2 463.1Z"/><path d="M1065.7 463.9L1070.2 468.4L1065.7 472.9L1061.2 468.4Z"/><path d="M1029.4 466.2L1033.9 470.7L1029.4 475.2L1024.9 470.7Z"/><path d="M1028.8 487.1L1033.3 491.6L1028.8 496.1L1024.3 491.6Z"/><path d="M1033.9 502.3L1038.4 506.8L1033.9 511.3L1029.4 506.8Z"/><path d="M1019.0 507.8L1023.5 512.3L1019.0 516.8L1014.5 512.3Z"/><path d="M1019.5 517.6L1024.0 522.1L1019.5 526.6L1015.0 522.1Z"/><path d="M1026.6 887.8L1031.1 892.3L1026.6 896.8L1022.1 892.3Z"/><path d="M1094.0 998.4L1098.5 1002.9L1094.0 1007.4L1089.5 1002.9Z"/><path d="M1101.9 1006.0L1106.4 1010.5L1101.9 1015.0L1097.4 1010.5Z"/><path d="M1093.3 1014.3L1097.8 1018.8L1093.3 1023.3L1088.8 1018.8Z"/><path d="M1133.0 1011.2L1137.5 1015.7L1133.0 1020.2L1128.5 1015.7Z"/><path d="M1109.9 1030.2L1114.4 1034.7L1109.9 1039.2L1105.4 1034.7Z"/><path d="M1071.9 1036.5L1076.4 1041.0L1071.9 1045.5L1067.4 1041.0Z"/><path d="M1120.6 1053.4L1125.1 1057.9L1120.6 1062.4L1116.1 1057.9Z"/><path d="M1150.3 1031.3L1154.8 1035.8L1150.3 1040.3L1145.8 1035.8Z"/><path d="M1162.1 1032.3L1166.6 1036.8L1162.1 1041.3L1157.6 1036.8Z"/><path d="M1171.1 1018.1L1175.6 1022.6L1171.1 1027.1L1166.6 1022.6Z"/><path d="M1200.8 1046.5L1205.3 1051.0L1200.8 1055.5L1196.3 1051.0Z"/><path d="M1216.4 1077.6L1220.9 1082.1L1216.4 1086.6L1211.9 1082.1Z"/><path d="M1084.6 1126.7L1089.1 1131.2L1084.6 1135.7L1080.1 1131.2Z"/><path d="M1525.9 719.1L1530.4 723.6L1525.9 728.1L1521.4 723.6Z"/><path d="M1528.0 726.4L1532.5 730.9L1528.0 735.4L1523.5 730.9Z"/><path d="M1513.9 730.3L1518.4 734.8L1513.9 739.3L1509.4 734.8Z"/><path d="M1512.4 744.5L1516.9 749.0L1512.4 753.5L1507.9 749.0Z"/><path d="M1540.9 778.2L1545.4 782.7L1540.9 787.2L1536.4 782.7Z"/><path d="M1540.9 782.2L1545.4 786.7L1540.9 791.2L1536.4 786.7Z"/><path d="M1479.2 779.9L1483.7 784.4L1479.2 788.9L1474.7 784.4Z"/><path d="M1471.2 834.3L1475.7 838.8L1471.2 843.3L1466.7 838.8Z"/><path d="M1526.2 1072.7L1530.7 1077.2L1526.2 1081.7L1521.7 1077.2Z"/><path d="M1622.4 1091.2L1626.9 1095.7L1622.4 1100.2L1617.9 1095.7Z"/><path d="M1549.6 1157.6L1554.1 1162.1L1549.6 1166.6L1545.1 1162.1Z"/></g>
<path d="M1306.9 788.5H1334.1M1320.5 774.9V802.1" stroke="#626262" stroke-width="1.25"/>
<circle cx="1320.5" cy="788.6" r="463.2" fill="none" stroke="#000" stroke-width="3"/>
<path d="M1320.50 324.90L1320.50 312.40M1401.02 331.94L1403.19 319.63M1479.09 352.86L1483.37 341.12M1552.35 387.02L1558.60 376.20M1618.56 433.39L1626.60 423.81M1675.71 490.54L1685.29 482.50M1722.08 556.75L1732.90 550.50M1756.24 630.01L1767.98 625.73M1777.16 708.08L1789.47 705.91M1784.20 788.60L1796.70 788.60M1777.16 869.12L1789.47 871.29M1756.24 947.19L1767.98 951.47M1722.08 1020.45L1732.90 1026.70M1675.71 1086.66L1685.29 1094.70M1618.56 1143.81L1626.60 1153.39M1552.35 1190.18L1558.60 1201.00M1479.09 1224.34L1483.37 1236.08M1401.02 1245.26L1403.19 1257.57M1320.50 1252.30L1320.50 1264.80M1239.98 1245.26L1237.81 1257.57M1161.91 1224.34L1157.63 1236.08M1088.65 1190.18L1082.40 1201.00M1022.44 1143.81L1014.40 1153.39M965.29 1086.66L955.71 1094.70M918.92 1020.45L908.10 1026.70M884.76 947.19L873.02 951.47M863.84 869.12L851.53 871.29M856.80 788.60L844.30 788.60M863.84 708.08L851.53 705.91M884.76 630.01L873.02 625.73M918.92 556.75L908.10 550.50M965.29 490.54L955.71 482.50M1022.44 433.39L1014.40 423.81M1088.65 387.02L1082.40 376.20M1161.91 352.86L1157.63 341.12M1239.98 331.94L1237.81 319.63" stroke="#000" stroke-width="2.8" fill="none"/>
</svg>
<span class="t" style="left:1309.46px;top:275.50px;font-size:30px;line-height:42px;color:#000;">N</span>
<span class="t" style="left:1310.40px;top:1257.61px;font-size:30px;line-height:42px;color:#000;">S</span>
<span class="t" style="left:1801.54px;top:767.31px;font-size:30px;line-height:42px;color:#000;">E</span>
<span class="t" style="left:815.97px;top:767.50px;font-size:30px;line-height:42px;color:#000;">W</span>
<div class="b" style="left:2073.5px;top:280.5px;width:478.0px;height:34px;background:#f5f5f7;border:2px solid #5f5f5f;box-sizing:border-box;"></div>
<span class="t" style="left:2079.40px;top:287.10px;font-size:15px;line-height:21px;color:#111;font-weight:700;">Properties</span>
<div class="b" style="left:2073.5px;top:314.5px;width:478.0px;height:118.5px;background:#f0f0f0;border:2px solid #5f5f5f;box-sizing:border-box;"></div>
<span class="t" style="left:2078.80px;top:320.20px;font-size:15px;line-height:21px;color:#111;font-weight:700;letter-spacing:0.294px;">Plot Mode</span>
<span class="t" style="left:2316.37px;top:320.20px;font-size:15px;line-height:21px;color:#1b1b1b;letter-spacing:-0.246px;">Pole Vector</span>
<span class="t" style="left:2079.70px;top:349.20px;font-size:15px;line-height:21px;color:#111;font-weight:700;letter-spacing:-0.253px;">Vector Count</span>
<span class="t" style="left:2316.84px;top:349.20px;font-size:15px;line-height:21px;color:#1b1b1b;letter-spacing:-0.263px;">61 (40 Entries)</span>
<div class="b" style="left:2075.5px;top:344.0px;width:474.0px;height:1.3px;background:#5f5f5f;"></div>
<span class="t" style="left:2078.80px;top:378.20px;font-size:15px;line-height:21px;color:#111;font-weight:700;letter-spacing:-0.039px;">Hemisphere</span>
<span class="t" style="left:2316.37px;top:378.20px;font-size:15px;line-height:21px;color:#1b1b1b;letter-spacing:-0.106px;">Lower Hemisphere</span>
<div class="b" style="left:2075.5px;top:373.0px;width:474.0px;height:1.3px;background:#5f5f5f;"></div>
<span class="t" style="left:2078.80px;top:407.20px;font-size:15px;line-height:21px;color:#111;font-weight:700;">Projection</span>
<span class="t" style="left:2316.37px;top:407.20px;font-size:15px;line-height:21px;color:#1b1b1b;letter-spacing:-0.110px;">Equal Angle</span>
<div class="b" style="left:2075.5px;top:402.0px;width:474.0px;height:1.3px;background:#5f5f5f;"></div>
<div class="b" style="left:2311.8px;top:316px;width:1.3px;height:115.5px;background:#5f5f5f;"></div>
<div class="b" style="left:2073.5px;top:438.5px;width:478.0px;height:34px;background:#f5f5f7;border:2px solid #5f5f5f;box-sizing:border-box;"></div>
<span class="t" style="left:2079.97px;top:444.90px;font-size:15px;line-height:21px;color:#111;font-weight:700;letter-spacing:-0.495px;">Symbols</span>
<div class="b" style="left:2073.5px;top:472.5px;width:478.0px;height:32px;background:#f0f0f0;border:2px solid #5f5f5f;box-sizing:border-box;"></div>
<div class="b" style="left:2148.7px;top:474px;width:1.3px;height:29px;background:#5f5f5f;"></div>
<div class="b" style="left:2348.6px;top:474px;width:1.3px;height:29px;background:#5f5f5f;"></div>
<svg class="b" style="left:2102px;top:478px;" width="20" height="20" viewBox="0 0 20 20"><path d="M10 1.2 L18.8 10 L10 18.8 L1.2 10 Z" fill="#fff" stroke="#9a9a9a" stroke-width="1"/></svg>
<span class="t" style="left:2208.17px;top:478.40px;font-size:15px;line-height:21px;color:#1b1b1b;letter-spacing:-0.279px;">Pole Vectors</span>
<span class="t" style="left:2441.64px;top:478.40px;font-size:15px;line-height:21px;color:#1b1b1b;letter-spacing:-0.290px;">61</span>
<div class="b" style="left:2073.5px;top:510.5px;width:478.0px;height:34px;background:#f5f5f7;border:2px solid #5f5f5f;box-sizing:border-box;"></div>
<span class="t" style="left:2079.78px;top:517.40px;font-size:15px;line-height:21px;color:#111;font-weight:700;letter-spacing:-0.218px;">Contours</span>
<div class="b" style="left:2073.5px;top:544.5px;width:478.0px;height:440.5px;background:#f0f0f0;border:2px solid #5f5f5f;box-sizing:border-box;"></div>
<div class="b" style="left:2323.6px;top:546px;width:1.3px;height:437.5px;background:#5f5f5f;"></div>
<div class="b" style="left:2075.5px;top:574.3px;width:474.0px;height:1.5px;background:#5f5f5f;"></div>
<span class="t" style="left:2179.78px;top:549.80px;font-size:15px;line-height:21px;color:#111;font-weight:700;letter-spacing:-0.230px;">Color</span>
<span class="t" style="left:2358.60px;top:549.80px;font-size:15px;line-height:21px;color:#111;font-weight:700;letter-spacing:-0.079px;">Density Concentration</span>
<div class="b" style="left:2080px;top:576.2px;width:238px;height:29.1px;background:#ffffff;"></div>
<span class="t" style="left:2402.66px;top:579.80px;font-size:15px;line-height:21px;color:#1b1b1b;letter-spacing:-0.197px;">0.00 - 2.36</span>
<div class="b" style="left:2080px;top:605.2px;width:238px;height:29.1px;background:#e6eeff;"></div>
<span class="t" style="left:2402.50px;top:608.80px;font-size:15px;line-height:21px;color:#1b1b1b;letter-spacing:-0.181px;">2.36 - 4.73</span>
<div class="b" style="left:2080px;top:634.2px;width:238px;height:29.1px;background:#ccf2ff;"></div>
<span class="t" style="left:2402.91px;top:637.80px;font-size:15px;line-height:21px;color:#1b1b1b;letter-spacing:-0.216px;">4.73 - 7.09</span>
<div class="b" style="left:2080px;top:663.2px;width:238px;height:29.1px;background:#b3fff0;"></div>
<span class="t" style="left:2402.48px;top:666.80px;font-size:15px;line-height:21px;color:#1b1b1b;letter-spacing:-0.179px;">7.09 - 9.46</span>
<div class="b" style="left:2080px;top:692.2px;width:238px;height:29.1px;background:#99ffc4;"></div>
<span class="t" style="left:2398.55px;top:695.80px;font-size:15px;line-height:21px;color:#1b1b1b;letter-spacing:-0.191px;">9.46 - 11.82</span>
<div class="b" style="left:2080px;top:721.2px;width:238px;height:29.1px;background:#80ff80;"></div>
<span class="t" style="left:2394.11px;top:724.80px;font-size:15px;line-height:21px;color:#1b1b1b;letter-spacing:-0.176px;">11.82 - 14.18</span>
<div class="b" style="left:2080px;top:750.2px;width:238px;height:29.1px;background:#a6ff66;"></div>
<span class="t" style="left:2394.11px;top:753.80px;font-size:15px;line-height:21px;color:#1b1b1b;letter-spacing:-0.178px;">14.18 - 16.55</span>
<div class="b" style="left:2080px;top:779.2px;width:238px;height:29.1px;background:#e0ff4d;"></div>
<span class="t" style="left:2394.11px;top:782.80px;font-size:15px;line-height:21px;color:#1b1b1b;letter-spacing:-0.169px;">16.55 - 18.91</span>
<div class="b" style="left:2080px;top:808.2px;width:238px;height:29.1px;background:#ffd333;"></div>
<span class="t" style="left:2394.11px;top:811.80px;font-size:15px;line-height:21px;color:#1b1b1b;letter-spacing:-0.176px;">18.91 - 21.28</span>
<div class="b" style="left:2080px;top:837.2px;width:238px;height:29.1px;background:#ff0000;"></div>
<span class="t" style="left:2394.50px;top:840.80px;font-size:15px;line-height:21px;color:#1b1b1b;letter-spacing:-0.226px;">21.28 - 23.64</span>
<span class="t" style="left:2079.18px;top:871.90px;font-size:15px;line-height:21px;color:#111;font-weight:700;letter-spacing:-0.116px;">Contour Data</span>
<span class="t" style="left:2328.17px;top:871.90px;font-size:15px;line-height:21px;color:#1b1b1b;letter-spacing:-0.054px;">Pole vector density</span>
<div class="b" style="left:2075.5px;top:866.3px;width:474.0px;height:1.4px;background:#5f5f5f;"></div>
<span class="t" style="left:2078.80px;top:900.90px;font-size:15px;line-height:21px;color:#111;font-weight:700;letter-spacing:0.082px;">Maximum Density</span>
<span class="t" style="left:2328.65px;top:900.90px;font-size:15px;line-height:21px;color:#1b1b1b;letter-spacing:-0.457px;">23.64%</span>
<div class="b" style="left:2075.5px;top:895.3px;width:474.0px;height:1.4px;background:#5f5f5f;"></div>
<span class="t" style="left:2079.18px;top:929.90px;font-size:15px;line-height:21px;color:#111;font-weight:700;letter-spacing:0.027px;">Contour Distribution</span>
<span class="t" style="left:2328.17px;top:929.90px;font-size:15px;line-height:21px;color:#1b1b1b;letter-spacing:-0.319px;">Fisher</span>
<div class="b" style="left:2075.5px;top:924.3px;width:474.0px;height:1.4px;background:#5f5f5f;"></div>
<span class="t" style="left:2079.18px;top:958.90px;font-size:15px;line-height:21px;color:#111;font-weight:700;letter-spacing:-0.275px;">Counting Circle Size</span>
<span class="t" style="left:2328.26px;top:958.90px;font-size:15px;line-height:21px;color:#1b1b1b;letter-spacing:-0.471px;">1.0%</span>
<div class="b" style="left:2075.5px;top:953.3px;width:474.0px;height:1.4px;background:#5f5f5f;"></div>
<div class="b" style="left:0px;top:1337px;width:2560px;height:43px;background:#f0f0f0;"></div>
<div class="b" style="left:0px;top:1379.6px;width:2560px;height:1.1px;background:#c2bec6;"></div>
<div class="b" style="left:0px;top:1380.5px;width:2560px;height:7.5px;background:linear-gradient(90deg,#dcdcef 0%,#e2dcef 15%,#ecdde8 25%,#f2e0df 40%,#f0e1e0 60%,#eadfe5 80%,#e4dde8 100%);"></div>
<span class="t" style="left:11.72px;top:1348.80px;font-size:15px;line-height:21px;color:#1b1b1b;letter-spacing:0.103px;">Scripting:</span>
<span class="t" style="left:81.17px;top:1348.80px;font-size:15px;line-height:21px;color:#1b1b1b;letter-spacing:-0.008px;">Disconnected</span>
<span class="t" style="left:189.84px;top:1348.80px;font-size:15px;line-height:21px;color:#1b1b1b;letter-spacing:-0.200px;">Connect</span>
<svg class="b" style="left:270.25px;top:1355.75px;" width="12.5" height="7.5" viewBox="0 0 12.5 7.5"><path d="M1 1 L6.25 6.5 L11.5 1" fill="none" stroke="#6a6a6a" stroke-width="1.1" stroke-linecap="round" stroke-linejoin="round"/></svg>
<div class="b" style="left:301.8px;top:1341px;width:1.2px;height:36px;background:#4a4a4a;"></div>
<span class="t" style="left:309.20px;top:1348.80px;font-size:15px;line-height:21px;color:#111;font-weight:700;letter-spacing:0.592px;">Idle</span>
<div class="b" style="left:2009.9px;top:1341px;width:1.2px;height:36px;background:#4a4a4a;"></div>
<span class="t" style="left:2017.24px;top:1348.80px;font-size:15px;line-height:21px;color:#1b1b1b;letter-spacing:0.137px;">Units:</span>
<span class="t" style="left:2091.07px;top:1348.80px;font-size:15px;line-height:21px;color:#1b1b1b;letter-spacing:0.479px;">Metric</span>
<svg class="b" style="left:2164.05px;top:1355.75px;" width="12.5" height="7.5" viewBox="0 0 12.5 7.5"><path d="M1 1 L6.25 6.5 L11.5 1" fill="none" stroke="#6a6a6a" stroke-width="1.1" stroke-linecap="round" stroke-linejoin="round"/></svg>
<div class="b" style="left:2195.7px;top:1341px;width:1.2px;height:36px;background:#4a4a4a;"></div>
<span class="t" style="left:2203.29px;top:1348.80px;font-size:15px;line-height:21px;color:#1b1b1b;letter-spacing:0.322px;">Orientation:</span>
<span class="t" style="left:2316.66px;top:1348.80px;font-size:15px;line-height:21px;color:#1b1b1b;letter-spacing:-0.068px;">Trend / Plunge</span>
<svg class="b" style="left:2441.15px;top:1355.75px;" width="12.5" height="7.5" viewBox="0 0 12.5 7.5"><path d="M1 1 L6.25 6.5 L11.5 1" fill="none" stroke="#6a6a6a" stroke-width="1.1" stroke-linecap="round" stroke-linejoin="round"/></svg>
<div class="b" style="left:2473.9px;top:1341px;width:1.2px;height:36px;background:#4a4a4a;"></div>
</body></html>
